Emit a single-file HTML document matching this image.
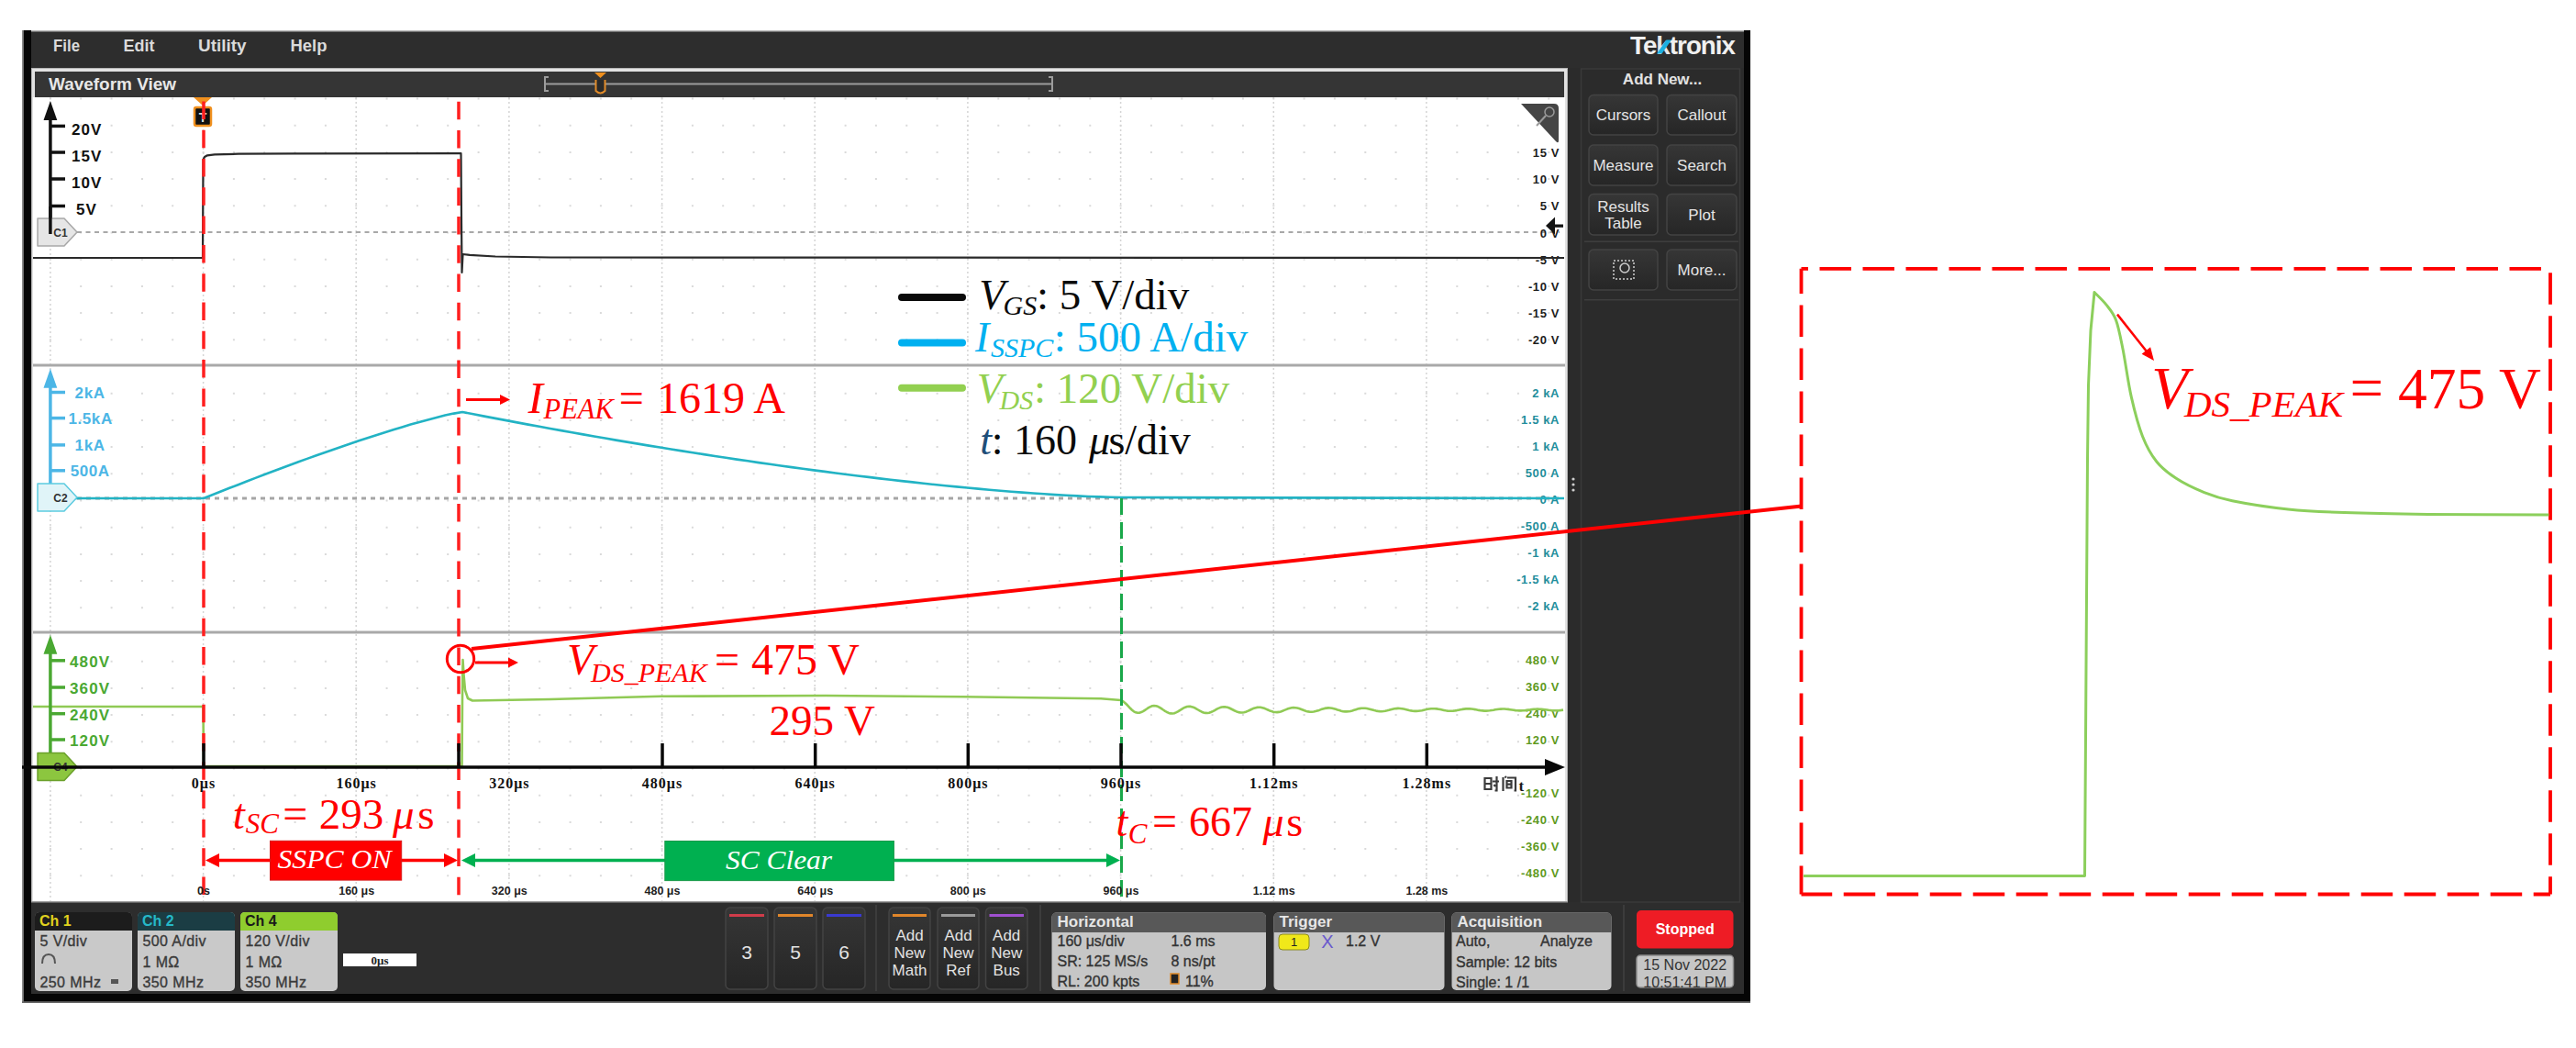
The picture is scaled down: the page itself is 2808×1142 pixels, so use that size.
<!DOCTYPE html>
<html><head><meta charset="utf-8"><style>
html,body{margin:0;padding:0;background:#fff;width:2808px;height:1142px;overflow:hidden}
svg{display:block}
</style></head><body>
<svg width="2808" height="1142" viewBox="0 0 2808 1142">
<defs><linearGradient id="bg1" x1="0" y1="0" x2="0" y2="1"><stop offset="0" stop-color="#363636"/><stop offset="1" stop-color="#262626"/></linearGradient></defs>
<rect x="24.0" y="33.0" width="1884.0" height="1060.0" fill="#2d2d2d" />
<rect x="24.0" y="33.0" width="1884.0" height="1.5" fill="#b8b8b8" />
<rect x="24.0" y="33.0" width="10.0" height="1060.0" fill="#050505" />
<rect x="1901.0" y="33.0" width="7.0" height="1060.0" fill="#050505" />
<rect x="24.0" y="1083.0" width="1884.0" height="10.0" fill="#050505" />
<rect x="24.0" y="33.0" width="1.8" height="1060.0" fill="#8a8a8a" />
<rect x="24.0" y="1091.2" width="1884.0" height="1.8" fill="#6a6a6a" />
<text x="58.0" y="56.0" font-family="Liberation Sans" font-size="19" font-weight="bold" font-style="normal" fill="#dadada" text-anchor="start" textLength="29" lengthAdjust="spacingAndGlyphs">File</text>
<text x="134.5" y="56.0" font-family="Liberation Sans" font-size="19" font-weight="bold" font-style="normal" fill="#dadada" text-anchor="start" textLength="34" lengthAdjust="spacingAndGlyphs">Edit</text>
<text x="216.0" y="56.0" font-family="Liberation Sans" font-size="19" font-weight="bold" font-style="normal" fill="#dadada" text-anchor="start" textLength="52.5" lengthAdjust="spacingAndGlyphs">Utility</text>
<text x="316.5" y="56.0" font-family="Liberation Sans" font-size="19" font-weight="bold" font-style="normal" fill="#dadada" text-anchor="start" textLength="40" lengthAdjust="spacingAndGlyphs">Help</text>
<text x="1777.0" y="58.5" font-family="Liberation Sans" font-size="28" font-weight="bold" font-style="normal" fill="#f0f0f0" text-anchor="start" textLength="114" lengthAdjust="spacingAndGlyphs" letter-spacing="-1">Te<tspan fill='#e8e8e8'>k</tspan>tronix</text>
<polygon points="1806,58.5 1811.5,58.5 1822,43.5 1816.5,43.5" fill="#1ab0e0"/>
<rect x="34.0" y="74.0" width="1675.0" height="909.0" fill="#b4b4b4" />
<rect x="35.0" y="75.0" width="1673.0" height="908.0" fill="#e2e2e2" />
<rect x="38.0" y="78.0" width="1667.0" height="28.0" fill="#353535" />
<rect x="36.0" y="106.0" width="1670.0" height="876.0" fill="#ffffff" />
<rect x="34.0" y="982.0" width="1675.0" height="1.5" fill="#9c9c9c" />
<text x="53.0" y="98.0" font-family="Liberation Sans" font-size="19" font-weight="bold" font-style="normal" fill="#e8e8e8" text-anchor="start" textLength="139" lengthAdjust="spacingAndGlyphs">Waveform View</text>
<line x1="594.0" y1="91.5" x2="1147.0" y2="91.5" stroke="#9c9c9c" stroke-width="2" />
<path d="M598,84 L594,84 L594,99 L598,99" fill="none" stroke="#9c9c9c" stroke-width="2"/>
<path d="M1143,84 L1147,84 L1147,99 L1143,99" fill="none" stroke="#9c9c9c" stroke-width="2"/>
<polygon points="648,79 661,79 654.5,85" fill="#f0901e"/>
<path d="M649.5,87 L649.5,99 Q654.5,104 659.5,99 L659.5,87" fill="#2a2a2a" stroke="#e08a28" stroke-width="2"/>
<path d="M53.9,107.5h2M87.2,107.5h2M120.6,107.5h2M153.9,107.5h2M187.2,107.5h2M220.6,107.5h2M253.9,107.5h2M287.2,107.5h2M320.6,107.5h2M353.9,107.5h2M387.2,107.5h2M420.6,107.5h2M453.9,107.5h2M487.2,107.5h2M520.6,107.5h2M553.9,107.5h2M587.2,107.5h2M620.6,107.5h2M653.9,107.5h2M687.2,107.5h2M720.6,107.5h2M753.9,107.5h2M787.2,107.5h2M820.6,107.5h2M853.9,107.5h2M887.2,107.5h2M920.6,107.5h2M953.9,107.5h2M987.3,107.5h2M1020.6,107.5h2M1053.9,107.5h2M1087.3,107.5h2M1120.6,107.5h2M1153.9,107.5h2M1187.3,107.5h2M1220.6,107.5h2M1253.9,107.5h2M1287.3,107.5h2M1320.6,107.5h2M1353.9,107.5h2M1387.3,107.5h2M1420.6,107.5h2M1453.9,107.5h2M1487.3,107.5h2M1520.6,107.5h2M1553.9,107.5h2M1587.3,107.5h2M1620.6,107.5h2M1653.9,107.5h2M1687.3,107.5h2M53.9,136.7h2M87.2,136.7h2M120.6,136.7h2M153.9,136.7h2M187.2,136.7h2M220.6,136.7h2M253.9,136.7h2M287.2,136.7h2M320.6,136.7h2M353.9,136.7h2M387.2,136.7h2M420.6,136.7h2M453.9,136.7h2M487.2,136.7h2M520.6,136.7h2M553.9,136.7h2M587.2,136.7h2M620.6,136.7h2M653.9,136.7h2M687.2,136.7h2M720.6,136.7h2M753.9,136.7h2M787.2,136.7h2M820.6,136.7h2M853.9,136.7h2M887.2,136.7h2M920.6,136.7h2M953.9,136.7h2M987.3,136.7h2M1020.6,136.7h2M1053.9,136.7h2M1087.3,136.7h2M1120.6,136.7h2M1153.9,136.7h2M1187.3,136.7h2M1220.6,136.7h2M1253.9,136.7h2M1287.3,136.7h2M1320.6,136.7h2M1353.9,136.7h2M1387.3,136.7h2M1420.6,136.7h2M1453.9,136.7h2M1487.3,136.7h2M1520.6,136.7h2M1553.9,136.7h2M1587.3,136.7h2M1620.6,136.7h2M1653.9,136.7h2M1687.3,136.7h2M53.9,165.9h2M87.2,165.9h2M120.6,165.9h2M153.9,165.9h2M187.2,165.9h2M220.6,165.9h2M253.9,165.9h2M287.2,165.9h2M320.6,165.9h2M353.9,165.9h2M387.2,165.9h2M420.6,165.9h2M453.9,165.9h2M487.2,165.9h2M520.6,165.9h2M553.9,165.9h2M587.2,165.9h2M620.6,165.9h2M653.9,165.9h2M687.2,165.9h2M720.6,165.9h2M753.9,165.9h2M787.2,165.9h2M820.6,165.9h2M853.9,165.9h2M887.2,165.9h2M920.6,165.9h2M953.9,165.9h2M987.3,165.9h2M1020.6,165.9h2M1053.9,165.9h2M1087.3,165.9h2M1120.6,165.9h2M1153.9,165.9h2M1187.3,165.9h2M1220.6,165.9h2M1253.9,165.9h2M1287.3,165.9h2M1320.6,165.9h2M1353.9,165.9h2M1387.3,165.9h2M1420.6,165.9h2M1453.9,165.9h2M1487.3,165.9h2M1520.6,165.9h2M1553.9,165.9h2M1587.3,165.9h2M1620.6,165.9h2M1653.9,165.9h2M1687.3,165.9h2M53.9,195.1h2M87.2,195.1h2M120.6,195.1h2M153.9,195.1h2M187.2,195.1h2M220.6,195.1h2M253.9,195.1h2M287.2,195.1h2M320.6,195.1h2M353.9,195.1h2M387.2,195.1h2M420.6,195.1h2M453.9,195.1h2M487.2,195.1h2M520.6,195.1h2M553.9,195.1h2M587.2,195.1h2M620.6,195.1h2M653.9,195.1h2M687.2,195.1h2M720.6,195.1h2M753.9,195.1h2M787.2,195.1h2M820.6,195.1h2M853.9,195.1h2M887.2,195.1h2M920.6,195.1h2M953.9,195.1h2M987.3,195.1h2M1020.6,195.1h2M1053.9,195.1h2M1087.3,195.1h2M1120.6,195.1h2M1153.9,195.1h2M1187.3,195.1h2M1220.6,195.1h2M1253.9,195.1h2M1287.3,195.1h2M1320.6,195.1h2M1353.9,195.1h2M1387.3,195.1h2M1420.6,195.1h2M1453.9,195.1h2M1487.3,195.1h2M1520.6,195.1h2M1553.9,195.1h2M1587.3,195.1h2M1620.6,195.1h2M1653.9,195.1h2M1687.3,195.1h2M53.9,224.3h2M87.2,224.3h2M120.6,224.3h2M153.9,224.3h2M187.2,224.3h2M220.6,224.3h2M253.9,224.3h2M287.2,224.3h2M320.6,224.3h2M353.9,224.3h2M387.2,224.3h2M420.6,224.3h2M453.9,224.3h2M487.2,224.3h2M520.6,224.3h2M553.9,224.3h2M587.2,224.3h2M620.6,224.3h2M653.9,224.3h2M687.2,224.3h2M720.6,224.3h2M753.9,224.3h2M787.2,224.3h2M820.6,224.3h2M853.9,224.3h2M887.2,224.3h2M920.6,224.3h2M953.9,224.3h2M987.3,224.3h2M1020.6,224.3h2M1053.9,224.3h2M1087.3,224.3h2M1120.6,224.3h2M1153.9,224.3h2M1187.3,224.3h2M1220.6,224.3h2M1253.9,224.3h2M1287.3,224.3h2M1320.6,224.3h2M1353.9,224.3h2M1387.3,224.3h2M1420.6,224.3h2M1453.9,224.3h2M1487.3,224.3h2M1520.6,224.3h2M1553.9,224.3h2M1587.3,224.3h2M1620.6,224.3h2M1653.9,224.3h2M1687.3,224.3h2M53.9,253.5h2M87.2,253.5h2M120.6,253.5h2M153.9,253.5h2M187.2,253.5h2M220.6,253.5h2M253.9,253.5h2M287.2,253.5h2M320.6,253.5h2M353.9,253.5h2M387.2,253.5h2M420.6,253.5h2M453.9,253.5h2M487.2,253.5h2M520.6,253.5h2M553.9,253.5h2M587.2,253.5h2M620.6,253.5h2M653.9,253.5h2M687.2,253.5h2M720.6,253.5h2M753.9,253.5h2M787.2,253.5h2M820.6,253.5h2M853.9,253.5h2M887.2,253.5h2M920.6,253.5h2M953.9,253.5h2M987.3,253.5h2M1020.6,253.5h2M1053.9,253.5h2M1087.3,253.5h2M1120.6,253.5h2M1153.9,253.5h2M1187.3,253.5h2M1220.6,253.5h2M1253.9,253.5h2M1287.3,253.5h2M1320.6,253.5h2M1353.9,253.5h2M1387.3,253.5h2M1420.6,253.5h2M1453.9,253.5h2M1487.3,253.5h2M1520.6,253.5h2M1553.9,253.5h2M1587.3,253.5h2M1620.6,253.5h2M1653.9,253.5h2M1687.3,253.5h2M53.9,282.7h2M87.2,282.7h2M120.6,282.7h2M153.9,282.7h2M187.2,282.7h2M220.6,282.7h2M253.9,282.7h2M287.2,282.7h2M320.6,282.7h2M353.9,282.7h2M387.2,282.7h2M420.6,282.7h2M453.9,282.7h2M487.2,282.7h2M520.6,282.7h2M553.9,282.7h2M587.2,282.7h2M620.6,282.7h2M653.9,282.7h2M687.2,282.7h2M720.6,282.7h2M753.9,282.7h2M787.2,282.7h2M820.6,282.7h2M853.9,282.7h2M887.2,282.7h2M920.6,282.7h2M953.9,282.7h2M987.3,282.7h2M1020.6,282.7h2M1053.9,282.7h2M1087.3,282.7h2M1120.6,282.7h2M1153.9,282.7h2M1187.3,282.7h2M1220.6,282.7h2M1253.9,282.7h2M1287.3,282.7h2M1320.6,282.7h2M1353.9,282.7h2M1387.3,282.7h2M1420.6,282.7h2M1453.9,282.7h2M1487.3,282.7h2M1520.6,282.7h2M1553.9,282.7h2M1587.3,282.7h2M1620.6,282.7h2M1653.9,282.7h2M1687.3,282.7h2M53.9,311.9h2M87.2,311.9h2M120.6,311.9h2M153.9,311.9h2M187.2,311.9h2M220.6,311.9h2M253.9,311.9h2M287.2,311.9h2M320.6,311.9h2M353.9,311.9h2M387.2,311.9h2M420.6,311.9h2M453.9,311.9h2M487.2,311.9h2M520.6,311.9h2M553.9,311.9h2M587.2,311.9h2M620.6,311.9h2M653.9,311.9h2M687.2,311.9h2M720.6,311.9h2M753.9,311.9h2M787.2,311.9h2M820.6,311.9h2M853.9,311.9h2M887.2,311.9h2M920.6,311.9h2M953.9,311.9h2M987.3,311.9h2M1020.6,311.9h2M1053.9,311.9h2M1087.3,311.9h2M1120.6,311.9h2M1153.9,311.9h2M1187.3,311.9h2M1220.6,311.9h2M1253.9,311.9h2M1287.3,311.9h2M1320.6,311.9h2M1353.9,311.9h2M1387.3,311.9h2M1420.6,311.9h2M1453.9,311.9h2M1487.3,311.9h2M1520.6,311.9h2M1553.9,311.9h2M1587.3,311.9h2M1620.6,311.9h2M1653.9,311.9h2M1687.3,311.9h2M53.9,341.1h2M87.2,341.1h2M120.6,341.1h2M153.9,341.1h2M187.2,341.1h2M220.6,341.1h2M253.9,341.1h2M287.2,341.1h2M320.6,341.1h2M353.9,341.1h2M387.2,341.1h2M420.6,341.1h2M453.9,341.1h2M487.2,341.1h2M520.6,341.1h2M553.9,341.1h2M587.2,341.1h2M620.6,341.1h2M653.9,341.1h2M687.2,341.1h2M720.6,341.1h2M753.9,341.1h2M787.2,341.1h2M820.6,341.1h2M853.9,341.1h2M887.2,341.1h2M920.6,341.1h2M953.9,341.1h2M987.3,341.1h2M1020.6,341.1h2M1053.9,341.1h2M1087.3,341.1h2M1120.6,341.1h2M1153.9,341.1h2M1187.3,341.1h2M1220.6,341.1h2M1253.9,341.1h2M1287.3,341.1h2M1320.6,341.1h2M1353.9,341.1h2M1387.3,341.1h2M1420.6,341.1h2M1453.9,341.1h2M1487.3,341.1h2M1520.6,341.1h2M1553.9,341.1h2M1587.3,341.1h2M1620.6,341.1h2M1653.9,341.1h2M1687.3,341.1h2M53.9,370.3h2M87.2,370.3h2M120.6,370.3h2M153.9,370.3h2M187.2,370.3h2M220.6,370.3h2M253.9,370.3h2M287.2,370.3h2M320.6,370.3h2M353.9,370.3h2M387.2,370.3h2M420.6,370.3h2M453.9,370.3h2M487.2,370.3h2M520.6,370.3h2M553.9,370.3h2M587.2,370.3h2M620.6,370.3h2M653.9,370.3h2M687.2,370.3h2M720.6,370.3h2M753.9,370.3h2M787.2,370.3h2M820.6,370.3h2M853.9,370.3h2M887.2,370.3h2M920.6,370.3h2M953.9,370.3h2M987.3,370.3h2M1020.6,370.3h2M1053.9,370.3h2M1087.3,370.3h2M1120.6,370.3h2M1153.9,370.3h2M1187.3,370.3h2M1220.6,370.3h2M1253.9,370.3h2M1287.3,370.3h2M1320.6,370.3h2M1353.9,370.3h2M1387.3,370.3h2M1420.6,370.3h2M1453.9,370.3h2M1487.3,370.3h2M1520.6,370.3h2M1553.9,370.3h2M1587.3,370.3h2M1620.6,370.3h2M1653.9,370.3h2M1687.3,370.3h2M53.9,428.7h2M87.2,428.7h2M120.6,428.7h2M153.9,428.7h2M187.2,428.7h2M220.6,428.7h2M253.9,428.7h2M287.2,428.7h2M320.6,428.7h2M353.9,428.7h2M387.2,428.7h2M420.6,428.7h2M453.9,428.7h2M487.2,428.7h2M520.6,428.7h2M553.9,428.7h2M587.2,428.7h2M620.6,428.7h2M653.9,428.7h2M687.2,428.7h2M720.6,428.7h2M753.9,428.7h2M787.2,428.7h2M820.6,428.7h2M853.9,428.7h2M887.2,428.7h2M920.6,428.7h2M953.9,428.7h2M987.3,428.7h2M1020.6,428.7h2M1053.9,428.7h2M1087.3,428.7h2M1120.6,428.7h2M1153.9,428.7h2M1187.3,428.7h2M1220.6,428.7h2M1253.9,428.7h2M1287.3,428.7h2M1320.6,428.7h2M1353.9,428.7h2M1387.3,428.7h2M1420.6,428.7h2M1453.9,428.7h2M1487.3,428.7h2M1520.6,428.7h2M1553.9,428.7h2M1587.3,428.7h2M1620.6,428.7h2M1653.9,428.7h2M1687.3,428.7h2M53.9,457.9h2M87.2,457.9h2M120.6,457.9h2M153.9,457.9h2M187.2,457.9h2M220.6,457.9h2M253.9,457.9h2M287.2,457.9h2M320.6,457.9h2M353.9,457.9h2M387.2,457.9h2M420.6,457.9h2M453.9,457.9h2M487.2,457.9h2M520.6,457.9h2M553.9,457.9h2M587.2,457.9h2M620.6,457.9h2M653.9,457.9h2M687.2,457.9h2M720.6,457.9h2M753.9,457.9h2M787.2,457.9h2M820.6,457.9h2M853.9,457.9h2M887.2,457.9h2M920.6,457.9h2M953.9,457.9h2M987.3,457.9h2M1020.6,457.9h2M1053.9,457.9h2M1087.3,457.9h2M1120.6,457.9h2M1153.9,457.9h2M1187.3,457.9h2M1220.6,457.9h2M1253.9,457.9h2M1287.3,457.9h2M1320.6,457.9h2M1353.9,457.9h2M1387.3,457.9h2M1420.6,457.9h2M1453.9,457.9h2M1487.3,457.9h2M1520.6,457.9h2M1553.9,457.9h2M1587.3,457.9h2M1620.6,457.9h2M1653.9,457.9h2M1687.3,457.9h2M53.9,487.1h2M87.2,487.1h2M120.6,487.1h2M153.9,487.1h2M187.2,487.1h2M220.6,487.1h2M253.9,487.1h2M287.2,487.1h2M320.6,487.1h2M353.9,487.1h2M387.2,487.1h2M420.6,487.1h2M453.9,487.1h2M487.2,487.1h2M520.6,487.1h2M553.9,487.1h2M587.2,487.1h2M620.6,487.1h2M653.9,487.1h2M687.2,487.1h2M720.6,487.1h2M753.9,487.1h2M787.2,487.1h2M820.6,487.1h2M853.9,487.1h2M887.2,487.1h2M920.6,487.1h2M953.9,487.1h2M987.3,487.1h2M1020.6,487.1h2M1053.9,487.1h2M1087.3,487.1h2M1120.6,487.1h2M1153.9,487.1h2M1187.3,487.1h2M1220.6,487.1h2M1253.9,487.1h2M1287.3,487.1h2M1320.6,487.1h2M1353.9,487.1h2M1387.3,487.1h2M1420.6,487.1h2M1453.9,487.1h2M1487.3,487.1h2M1520.6,487.1h2M1553.9,487.1h2M1587.3,487.1h2M1620.6,487.1h2M1653.9,487.1h2M1687.3,487.1h2M53.9,516.3h2M87.2,516.3h2M120.6,516.3h2M153.9,516.3h2M187.2,516.3h2M220.6,516.3h2M253.9,516.3h2M287.2,516.3h2M320.6,516.3h2M353.9,516.3h2M387.2,516.3h2M420.6,516.3h2M453.9,516.3h2M487.2,516.3h2M520.6,516.3h2M553.9,516.3h2M587.2,516.3h2M620.6,516.3h2M653.9,516.3h2M687.2,516.3h2M720.6,516.3h2M753.9,516.3h2M787.2,516.3h2M820.6,516.3h2M853.9,516.3h2M887.2,516.3h2M920.6,516.3h2M953.9,516.3h2M987.3,516.3h2M1020.6,516.3h2M1053.9,516.3h2M1087.3,516.3h2M1120.6,516.3h2M1153.9,516.3h2M1187.3,516.3h2M1220.6,516.3h2M1253.9,516.3h2M1287.3,516.3h2M1320.6,516.3h2M1353.9,516.3h2M1387.3,516.3h2M1420.6,516.3h2M1453.9,516.3h2M1487.3,516.3h2M1520.6,516.3h2M1553.9,516.3h2M1587.3,516.3h2M1620.6,516.3h2M1653.9,516.3h2M1687.3,516.3h2M53.9,545.5h2M87.2,545.5h2M120.6,545.5h2M153.9,545.5h2M187.2,545.5h2M220.6,545.5h2M253.9,545.5h2M287.2,545.5h2M320.6,545.5h2M353.9,545.5h2M387.2,545.5h2M420.6,545.5h2M453.9,545.5h2M487.2,545.5h2M520.6,545.5h2M553.9,545.5h2M587.2,545.5h2M620.6,545.5h2M653.9,545.5h2M687.2,545.5h2M720.6,545.5h2M753.9,545.5h2M787.2,545.5h2M820.6,545.5h2M853.9,545.5h2M887.2,545.5h2M920.6,545.5h2M953.9,545.5h2M987.3,545.5h2M1020.6,545.5h2M1053.9,545.5h2M1087.3,545.5h2M1120.6,545.5h2M1153.9,545.5h2M1187.3,545.5h2M1220.6,545.5h2M1253.9,545.5h2M1287.3,545.5h2M1320.6,545.5h2M1353.9,545.5h2M1387.3,545.5h2M1420.6,545.5h2M1453.9,545.5h2M1487.3,545.5h2M1520.6,545.5h2M1553.9,545.5h2M1587.3,545.5h2M1620.6,545.5h2M1653.9,545.5h2M1687.3,545.5h2M53.9,574.7h2M87.2,574.7h2M120.6,574.7h2M153.9,574.7h2M187.2,574.7h2M220.6,574.7h2M253.9,574.7h2M287.2,574.7h2M320.6,574.7h2M353.9,574.7h2M387.2,574.7h2M420.6,574.7h2M453.9,574.7h2M487.2,574.7h2M520.6,574.7h2M553.9,574.7h2M587.2,574.7h2M620.6,574.7h2M653.9,574.7h2M687.2,574.7h2M720.6,574.7h2M753.9,574.7h2M787.2,574.7h2M820.6,574.7h2M853.9,574.7h2M887.2,574.7h2M920.6,574.7h2M953.9,574.7h2M987.3,574.7h2M1020.6,574.7h2M1053.9,574.7h2M1087.3,574.7h2M1120.6,574.7h2M1153.9,574.7h2M1187.3,574.7h2M1220.6,574.7h2M1253.9,574.7h2M1287.3,574.7h2M1320.6,574.7h2M1353.9,574.7h2M1387.3,574.7h2M1420.6,574.7h2M1453.9,574.7h2M1487.3,574.7h2M1520.6,574.7h2M1553.9,574.7h2M1587.3,574.7h2M1620.6,574.7h2M1653.9,574.7h2M1687.3,574.7h2M53.9,603.9h2M87.2,603.9h2M120.6,603.9h2M153.9,603.9h2M187.2,603.9h2M220.6,603.9h2M253.9,603.9h2M287.2,603.9h2M320.6,603.9h2M353.9,603.9h2M387.2,603.9h2M420.6,603.9h2M453.9,603.9h2M487.2,603.9h2M520.6,603.9h2M553.9,603.9h2M587.2,603.9h2M620.6,603.9h2M653.9,603.9h2M687.2,603.9h2M720.6,603.9h2M753.9,603.9h2M787.2,603.9h2M820.6,603.9h2M853.9,603.9h2M887.2,603.9h2M920.6,603.9h2M953.9,603.9h2M987.3,603.9h2M1020.6,603.9h2M1053.9,603.9h2M1087.3,603.9h2M1120.6,603.9h2M1153.9,603.9h2M1187.3,603.9h2M1220.6,603.9h2M1253.9,603.9h2M1287.3,603.9h2M1320.6,603.9h2M1353.9,603.9h2M1387.3,603.9h2M1420.6,603.9h2M1453.9,603.9h2M1487.3,603.9h2M1520.6,603.9h2M1553.9,603.9h2M1587.3,603.9h2M1620.6,603.9h2M1653.9,603.9h2M1687.3,603.9h2M53.9,633.1h2M87.2,633.1h2M120.6,633.1h2M153.9,633.1h2M187.2,633.1h2M220.6,633.1h2M253.9,633.1h2M287.2,633.1h2M320.6,633.1h2M353.9,633.1h2M387.2,633.1h2M420.6,633.1h2M453.9,633.1h2M487.2,633.1h2M520.6,633.1h2M553.9,633.1h2M587.2,633.1h2M620.6,633.1h2M653.9,633.1h2M687.2,633.1h2M720.6,633.1h2M753.9,633.1h2M787.2,633.1h2M820.6,633.1h2M853.9,633.1h2M887.2,633.1h2M920.6,633.1h2M953.9,633.1h2M987.3,633.1h2M1020.6,633.1h2M1053.9,633.1h2M1087.3,633.1h2M1120.6,633.1h2M1153.9,633.1h2M1187.3,633.1h2M1220.6,633.1h2M1253.9,633.1h2M1287.3,633.1h2M1320.6,633.1h2M1353.9,633.1h2M1387.3,633.1h2M1420.6,633.1h2M1453.9,633.1h2M1487.3,633.1h2M1520.6,633.1h2M1553.9,633.1h2M1587.3,633.1h2M1620.6,633.1h2M1653.9,633.1h2M1687.3,633.1h2M53.9,662.3h2M87.2,662.3h2M120.6,662.3h2M153.9,662.3h2M187.2,662.3h2M220.6,662.3h2M253.9,662.3h2M287.2,662.3h2M320.6,662.3h2M353.9,662.3h2M387.2,662.3h2M420.6,662.3h2M453.9,662.3h2M487.2,662.3h2M520.6,662.3h2M553.9,662.3h2M587.2,662.3h2M620.6,662.3h2M653.9,662.3h2M687.2,662.3h2M720.6,662.3h2M753.9,662.3h2M787.2,662.3h2M820.6,662.3h2M853.9,662.3h2M887.2,662.3h2M920.6,662.3h2M953.9,662.3h2M987.3,662.3h2M1020.6,662.3h2M1053.9,662.3h2M1087.3,662.3h2M1120.6,662.3h2M1153.9,662.3h2M1187.3,662.3h2M1220.6,662.3h2M1253.9,662.3h2M1287.3,662.3h2M1320.6,662.3h2M1353.9,662.3h2M1387.3,662.3h2M1420.6,662.3h2M1453.9,662.3h2M1487.3,662.3h2M1520.6,662.3h2M1553.9,662.3h2M1587.3,662.3h2M1620.6,662.3h2M1653.9,662.3h2M1687.3,662.3h2M53.9,720.7h2M87.2,720.7h2M120.6,720.7h2M153.9,720.7h2M187.2,720.7h2M220.6,720.7h2M253.9,720.7h2M287.2,720.7h2M320.6,720.7h2M353.9,720.7h2M387.2,720.7h2M420.6,720.7h2M453.9,720.7h2M487.2,720.7h2M520.6,720.7h2M553.9,720.7h2M587.2,720.7h2M620.6,720.7h2M653.9,720.7h2M687.2,720.7h2M720.6,720.7h2M753.9,720.7h2M787.2,720.7h2M820.6,720.7h2M853.9,720.7h2M887.2,720.7h2M920.6,720.7h2M953.9,720.7h2M987.3,720.7h2M1020.6,720.7h2M1053.9,720.7h2M1087.3,720.7h2M1120.6,720.7h2M1153.9,720.7h2M1187.3,720.7h2M1220.6,720.7h2M1253.9,720.7h2M1287.3,720.7h2M1320.6,720.7h2M1353.9,720.7h2M1387.3,720.7h2M1420.6,720.7h2M1453.9,720.7h2M1487.3,720.7h2M1520.6,720.7h2M1553.9,720.7h2M1587.3,720.7h2M1620.6,720.7h2M1653.9,720.7h2M1687.3,720.7h2M53.9,749.9h2M87.2,749.9h2M120.6,749.9h2M153.9,749.9h2M187.2,749.9h2M220.6,749.9h2M253.9,749.9h2M287.2,749.9h2M320.6,749.9h2M353.9,749.9h2M387.2,749.9h2M420.6,749.9h2M453.9,749.9h2M487.2,749.9h2M520.6,749.9h2M553.9,749.9h2M587.2,749.9h2M620.6,749.9h2M653.9,749.9h2M687.2,749.9h2M720.6,749.9h2M753.9,749.9h2M787.2,749.9h2M820.6,749.9h2M853.9,749.9h2M887.2,749.9h2M920.6,749.9h2M953.9,749.9h2M987.3,749.9h2M1020.6,749.9h2M1053.9,749.9h2M1087.3,749.9h2M1120.6,749.9h2M1153.9,749.9h2M1187.3,749.9h2M1220.6,749.9h2M1253.9,749.9h2M1287.3,749.9h2M1320.6,749.9h2M1353.9,749.9h2M1387.3,749.9h2M1420.6,749.9h2M1453.9,749.9h2M1487.3,749.9h2M1520.6,749.9h2M1553.9,749.9h2M1587.3,749.9h2M1620.6,749.9h2M1653.9,749.9h2M1687.3,749.9h2M53.9,779.1h2M87.2,779.1h2M120.6,779.1h2M153.9,779.1h2M187.2,779.1h2M220.6,779.1h2M253.9,779.1h2M287.2,779.1h2M320.6,779.1h2M353.9,779.1h2M387.2,779.1h2M420.6,779.1h2M453.9,779.1h2M487.2,779.1h2M520.6,779.1h2M553.9,779.1h2M587.2,779.1h2M620.6,779.1h2M653.9,779.1h2M687.2,779.1h2M720.6,779.1h2M753.9,779.1h2M787.2,779.1h2M820.6,779.1h2M853.9,779.1h2M887.2,779.1h2M920.6,779.1h2M953.9,779.1h2M987.3,779.1h2M1020.6,779.1h2M1053.9,779.1h2M1087.3,779.1h2M1120.6,779.1h2M1153.9,779.1h2M1187.3,779.1h2M1220.6,779.1h2M1253.9,779.1h2M1287.3,779.1h2M1320.6,779.1h2M1353.9,779.1h2M1387.3,779.1h2M1420.6,779.1h2M1453.9,779.1h2M1487.3,779.1h2M1520.6,779.1h2M1553.9,779.1h2M1587.3,779.1h2M1620.6,779.1h2M1653.9,779.1h2M1687.3,779.1h2M53.9,808.3h2M87.2,808.3h2M120.6,808.3h2M153.9,808.3h2M187.2,808.3h2M220.6,808.3h2M253.9,808.3h2M287.2,808.3h2M320.6,808.3h2M353.9,808.3h2M387.2,808.3h2M420.6,808.3h2M453.9,808.3h2M487.2,808.3h2M520.6,808.3h2M553.9,808.3h2M587.2,808.3h2M620.6,808.3h2M653.9,808.3h2M687.2,808.3h2M720.6,808.3h2M753.9,808.3h2M787.2,808.3h2M820.6,808.3h2M853.9,808.3h2M887.2,808.3h2M920.6,808.3h2M953.9,808.3h2M987.3,808.3h2M1020.6,808.3h2M1053.9,808.3h2M1087.3,808.3h2M1120.6,808.3h2M1153.9,808.3h2M1187.3,808.3h2M1220.6,808.3h2M1253.9,808.3h2M1287.3,808.3h2M1320.6,808.3h2M1353.9,808.3h2M1387.3,808.3h2M1420.6,808.3h2M1453.9,808.3h2M1487.3,808.3h2M1520.6,808.3h2M1553.9,808.3h2M1587.3,808.3h2M1620.6,808.3h2M1653.9,808.3h2M1687.3,808.3h2M53.9,837.5h2M87.2,837.5h2M120.6,837.5h2M153.9,837.5h2M187.2,837.5h2M220.6,837.5h2M253.9,837.5h2M287.2,837.5h2M320.6,837.5h2M353.9,837.5h2M387.2,837.5h2M420.6,837.5h2M453.9,837.5h2M487.2,837.5h2M520.6,837.5h2M553.9,837.5h2M587.2,837.5h2M620.6,837.5h2M653.9,837.5h2M687.2,837.5h2M720.6,837.5h2M753.9,837.5h2M787.2,837.5h2M820.6,837.5h2M853.9,837.5h2M887.2,837.5h2M920.6,837.5h2M953.9,837.5h2M987.3,837.5h2M1020.6,837.5h2M1053.9,837.5h2M1087.3,837.5h2M1120.6,837.5h2M1153.9,837.5h2M1187.3,837.5h2M1220.6,837.5h2M1253.9,837.5h2M1287.3,837.5h2M1320.6,837.5h2M1353.9,837.5h2M1387.3,837.5h2M1420.6,837.5h2M1453.9,837.5h2M1487.3,837.5h2M1520.6,837.5h2M1553.9,837.5h2M1587.3,837.5h2M1620.6,837.5h2M1653.9,837.5h2M1687.3,837.5h2M53.9,866.7h2M87.2,866.7h2M120.6,866.7h2M153.9,866.7h2M187.2,866.7h2M220.6,866.7h2M253.9,866.7h2M287.2,866.7h2M320.6,866.7h2M353.9,866.7h2M387.2,866.7h2M420.6,866.7h2M453.9,866.7h2M487.2,866.7h2M520.6,866.7h2M553.9,866.7h2M587.2,866.7h2M620.6,866.7h2M653.9,866.7h2M687.2,866.7h2M720.6,866.7h2M753.9,866.7h2M787.2,866.7h2M820.6,866.7h2M853.9,866.7h2M887.2,866.7h2M920.6,866.7h2M953.9,866.7h2M987.3,866.7h2M1020.6,866.7h2M1053.9,866.7h2M1087.3,866.7h2M1120.6,866.7h2M1153.9,866.7h2M1187.3,866.7h2M1220.6,866.7h2M1253.9,866.7h2M1287.3,866.7h2M1320.6,866.7h2M1353.9,866.7h2M1387.3,866.7h2M1420.6,866.7h2M1453.9,866.7h2M1487.3,866.7h2M1520.6,866.7h2M1553.9,866.7h2M1587.3,866.7h2M1620.6,866.7h2M1653.9,866.7h2M1687.3,866.7h2M53.9,895.9h2M87.2,895.9h2M120.6,895.9h2M153.9,895.9h2M187.2,895.9h2M220.6,895.9h2M253.9,895.9h2M287.2,895.9h2M320.6,895.9h2M353.9,895.9h2M387.2,895.9h2M420.6,895.9h2M453.9,895.9h2M487.2,895.9h2M520.6,895.9h2M553.9,895.9h2M587.2,895.9h2M620.6,895.9h2M653.9,895.9h2M687.2,895.9h2M720.6,895.9h2M753.9,895.9h2M787.2,895.9h2M820.6,895.9h2M853.9,895.9h2M887.2,895.9h2M920.6,895.9h2M953.9,895.9h2M987.3,895.9h2M1020.6,895.9h2M1053.9,895.9h2M1087.3,895.9h2M1120.6,895.9h2M1153.9,895.9h2M1187.3,895.9h2M1220.6,895.9h2M1253.9,895.9h2M1287.3,895.9h2M1320.6,895.9h2M1353.9,895.9h2M1387.3,895.9h2M1420.6,895.9h2M1453.9,895.9h2M1487.3,895.9h2M1520.6,895.9h2M1553.9,895.9h2M1587.3,895.9h2M1620.6,895.9h2M1653.9,895.9h2M1687.3,895.9h2M53.9,925.1h2M87.2,925.1h2M120.6,925.1h2M153.9,925.1h2M187.2,925.1h2M220.6,925.1h2M253.9,925.1h2M287.2,925.1h2M320.6,925.1h2M353.9,925.1h2M387.2,925.1h2M420.6,925.1h2M453.9,925.1h2M487.2,925.1h2M520.6,925.1h2M553.9,925.1h2M587.2,925.1h2M620.6,925.1h2M653.9,925.1h2M687.2,925.1h2M720.6,925.1h2M753.9,925.1h2M787.2,925.1h2M820.6,925.1h2M853.9,925.1h2M887.2,925.1h2M920.6,925.1h2M953.9,925.1h2M987.3,925.1h2M1020.6,925.1h2M1053.9,925.1h2M1087.3,925.1h2M1120.6,925.1h2M1153.9,925.1h2M1187.3,925.1h2M1220.6,925.1h2M1253.9,925.1h2M1287.3,925.1h2M1320.6,925.1h2M1353.9,925.1h2M1387.3,925.1h2M1420.6,925.1h2M1453.9,925.1h2M1487.3,925.1h2M1520.6,925.1h2M1553.9,925.1h2M1587.3,925.1h2M1620.6,925.1h2M1653.9,925.1h2M1687.3,925.1h2M53.9,954.3h2M87.2,954.3h2M120.6,954.3h2M153.9,954.3h2M187.2,954.3h2M220.6,954.3h2M253.9,954.3h2M287.2,954.3h2M320.6,954.3h2M353.9,954.3h2M387.2,954.3h2M420.6,954.3h2M453.9,954.3h2M487.2,954.3h2M520.6,954.3h2M553.9,954.3h2M587.2,954.3h2M620.6,954.3h2M653.9,954.3h2M687.2,954.3h2M720.6,954.3h2M753.9,954.3h2M787.2,954.3h2M820.6,954.3h2M853.9,954.3h2M887.2,954.3h2M920.6,954.3h2M953.9,954.3h2M987.3,954.3h2M1020.6,954.3h2M1053.9,954.3h2M1087.3,954.3h2M1120.6,954.3h2M1153.9,954.3h2M1187.3,954.3h2M1220.6,954.3h2M1253.9,954.3h2M1287.3,954.3h2M1320.6,954.3h2M1353.9,954.3h2M1387.3,954.3h2M1420.6,954.3h2M1453.9,954.3h2M1487.3,954.3h2M1520.6,954.3h2M1553.9,954.3h2M1587.3,954.3h2M1620.6,954.3h2M1653.9,954.3h2M1687.3,954.3h2" stroke="#dadada" stroke-width="2" fill="none"/>
<line x1="54.9" y1="106.0" x2="54.9" y2="982.0" stroke="#d4d4d4" stroke-width="1.5" stroke-dasharray="2 3"/>
<line x1="221.6" y1="106.0" x2="221.6" y2="982.0" stroke="#d4d4d4" stroke-width="1.5" stroke-dasharray="2 3"/>
<line x1="388.2" y1="106.0" x2="388.2" y2="982.0" stroke="#d4d4d4" stroke-width="1.5" stroke-dasharray="2 3"/>
<line x1="554.9" y1="106.0" x2="554.9" y2="982.0" stroke="#d4d4d4" stroke-width="1.5" stroke-dasharray="2 3"/>
<line x1="721.6" y1="106.0" x2="721.6" y2="982.0" stroke="#d4d4d4" stroke-width="1.5" stroke-dasharray="2 3"/>
<line x1="888.2" y1="106.0" x2="888.2" y2="982.0" stroke="#d4d4d4" stroke-width="1.5" stroke-dasharray="2 3"/>
<line x1="1054.9" y1="106.0" x2="1054.9" y2="982.0" stroke="#d4d4d4" stroke-width="1.5" stroke-dasharray="2 3"/>
<line x1="1221.6" y1="106.0" x2="1221.6" y2="982.0" stroke="#d4d4d4" stroke-width="1.5" stroke-dasharray="2 3"/>
<line x1="1388.3" y1="106.0" x2="1388.3" y2="982.0" stroke="#d4d4d4" stroke-width="1.5" stroke-dasharray="2 3"/>
<line x1="1554.9" y1="106.0" x2="1554.9" y2="982.0" stroke="#d4d4d4" stroke-width="1.5" stroke-dasharray="2 3"/>
<rect x="36.0" y="396.5" width="1670.0" height="3.0" fill="#a9a9a9" />
<rect x="36.0" y="687.5" width="1670.0" height="3.0" fill="#a9a9a9" />
<line x1="84.0" y1="253.0" x2="1700.0" y2="253.0" stroke="#a8a8a8" stroke-width="2" stroke-dasharray="5 4.5"/>
<line x1="84.0" y1="543.0" x2="1700.0" y2="543.0" stroke="#a6a6a6" stroke-width="3" stroke-dasharray="5 5"/>
<text x="1700.0" y="171.0" font-family="Liberation Sans" font-size="13" font-weight="bold" font-style="normal" fill="#1e1e1e" text-anchor="end" letter-spacing="0.6">15 V</text>
<text x="1700.0" y="200.2" font-family="Liberation Sans" font-size="13" font-weight="bold" font-style="normal" fill="#1e1e1e" text-anchor="end" letter-spacing="0.6">10 V</text>
<text x="1700.0" y="229.4" font-family="Liberation Sans" font-size="13" font-weight="bold" font-style="normal" fill="#1e1e1e" text-anchor="end" letter-spacing="0.6">5 V</text>
<text x="1700.0" y="258.6" font-family="Liberation Sans" font-size="13" font-weight="bold" font-style="normal" fill="#1e1e1e" text-anchor="end" letter-spacing="0.6">0 V</text>
<text x="1700.0" y="287.8" font-family="Liberation Sans" font-size="13" font-weight="bold" font-style="normal" fill="#1e1e1e" text-anchor="end" letter-spacing="0.6">-5 V</text>
<text x="1700.0" y="317.0" font-family="Liberation Sans" font-size="13" font-weight="bold" font-style="normal" fill="#1e1e1e" text-anchor="end" letter-spacing="0.6">-10 V</text>
<text x="1700.0" y="346.2" font-family="Liberation Sans" font-size="13" font-weight="bold" font-style="normal" fill="#1e1e1e" text-anchor="end" letter-spacing="0.6">-15 V</text>
<text x="1700.0" y="375.4" font-family="Liberation Sans" font-size="13" font-weight="bold" font-style="normal" fill="#1e1e1e" text-anchor="end" letter-spacing="0.6">-20 V</text>
<text x="1700.0" y="433.0" font-family="Liberation Sans" font-size="13" font-weight="bold" font-style="normal" fill="#1f8e9c" text-anchor="end" letter-spacing="0.6">2 kA</text>
<text x="1700.0" y="462.0" font-family="Liberation Sans" font-size="13" font-weight="bold" font-style="normal" fill="#1f8e9c" text-anchor="end" letter-spacing="0.6">1.5 kA</text>
<text x="1700.0" y="491.0" font-family="Liberation Sans" font-size="13" font-weight="bold" font-style="normal" fill="#1f8e9c" text-anchor="end" letter-spacing="0.6">1 kA</text>
<text x="1700.0" y="520.0" font-family="Liberation Sans" font-size="13" font-weight="bold" font-style="normal" fill="#1f8e9c" text-anchor="end" letter-spacing="0.6">500 A</text>
<text x="1700.0" y="549.0" font-family="Liberation Sans" font-size="13" font-weight="bold" font-style="normal" fill="#1f8e9c" text-anchor="end" letter-spacing="0.6">0 A</text>
<text x="1700.0" y="578.0" font-family="Liberation Sans" font-size="13" font-weight="bold" font-style="normal" fill="#1f8e9c" text-anchor="end" letter-spacing="0.6">-500 A</text>
<text x="1700.0" y="607.0" font-family="Liberation Sans" font-size="13" font-weight="bold" font-style="normal" fill="#1f8e9c" text-anchor="end" letter-spacing="0.6">-1 kA</text>
<text x="1700.0" y="636.0" font-family="Liberation Sans" font-size="13" font-weight="bold" font-style="normal" fill="#1f8e9c" text-anchor="end" letter-spacing="0.6">-1.5 kA</text>
<text x="1700.0" y="665.0" font-family="Liberation Sans" font-size="13" font-weight="bold" font-style="normal" fill="#1f8e9c" text-anchor="end" letter-spacing="0.6">-2 kA</text>
<text x="1700.0" y="723.5" font-family="Liberation Sans" font-size="13" font-weight="bold" font-style="normal" fill="#5f9a1e" text-anchor="end" letter-spacing="0.6">480 V</text>
<text x="1700.0" y="752.5" font-family="Liberation Sans" font-size="13" font-weight="bold" font-style="normal" fill="#5f9a1e" text-anchor="end" letter-spacing="0.6">360 V</text>
<text x="1700.0" y="781.5" font-family="Liberation Sans" font-size="13" font-weight="bold" font-style="normal" fill="#5f9a1e" text-anchor="end" letter-spacing="0.6">240 V</text>
<text x="1700.0" y="810.5" font-family="Liberation Sans" font-size="13" font-weight="bold" font-style="normal" fill="#5f9a1e" text-anchor="end" letter-spacing="0.6">120 V</text>
<text x="1700.0" y="868.5" font-family="Liberation Sans" font-size="13" font-weight="bold" font-style="normal" fill="#5f9a1e" text-anchor="end" letter-spacing="0.6">-120 V</text>
<text x="1700.0" y="897.5" font-family="Liberation Sans" font-size="13" font-weight="bold" font-style="normal" fill="#5f9a1e" text-anchor="end" letter-spacing="0.6">-240 V</text>
<text x="1700.0" y="926.5" font-family="Liberation Sans" font-size="13" font-weight="bold" font-style="normal" fill="#5f9a1e" text-anchor="end" letter-spacing="0.6">-360 V</text>
<text x="1700.0" y="955.5" font-family="Liberation Sans" font-size="13" font-weight="bold" font-style="normal" fill="#5f9a1e" text-anchor="end" letter-spacing="0.6">-480 V</text>
<path d="M1658,113 L1694,113 Q1699,113 1699,118 L1699,153 Q1699,157 1696,154 Z" fill="#454545"/>
<circle cx="1689" cy="122" r="5" fill="none" stroke="#9a9a9a" stroke-width="1.5"/>
<line x1="1685.0" y1="126.0" x2="1675.0" y2="137.0" stroke="#9a9a9a" stroke-width="2" />
<polyline points="36.0,281.0 221.0,281.0 221.5,174.0 223.0,171.0 226.0,169.3 234.0,168.3 260.0,167.7 320.0,167.3 500.0,167.2 502.5,167.2 503.0,240.0 503.5,297.0 504.5,277.0 512.0,277.8 540.0,279.5 600.0,280.5 1705.0,281.0" fill="none" stroke="#2a2a2a" stroke-width="2.2" stroke-linejoin="round" />
<polyline points="76.0,543.0 222.0,543.0 231.4,539.3 240.8,535.5 250.2,531.8 259.6,528.2 269.0,524.5 278.4,520.9 287.8,517.3 297.2,513.8 306.6,510.3 316.0,506.8 325.4,503.3 334.8,499.9 344.2,496.5 353.6,493.2 363.0,489.9 372.4,486.7 381.8,483.5 391.2,480.3 400.6,477.2 410.0,474.2 419.4,471.2 428.8,468.2 438.2,465.4 447.6,462.6 457.0,459.9 466.4,457.4 475.8,454.9 485.2,452.6 494.6,450.6 504.0,449.0 516.0,451.3 527.9,453.6 539.9,455.9 551.9,458.1 563.8,460.4 575.8,462.6 587.8,464.8 599.7,467.0 611.7,469.1 623.7,471.3 635.6,473.4 647.6,475.5 659.6,477.5 671.5,479.6 683.5,481.6 695.5,483.6 707.4,485.6 719.4,487.5 731.4,489.5 743.3,491.4 755.3,493.3 767.3,495.1 779.2,497.0 791.2,498.8 803.2,500.6 815.1,502.3 827.1,504.1 839.1,505.8 851.0,507.5 863.0,509.1 875.0,510.7 886.9,512.4 898.9,513.9 910.9,515.5 922.8,517.0 934.8,518.5 946.8,519.9 958.7,521.4 970.7,522.7 982.7,524.1 994.6,525.4 1006.6,526.7 1018.6,528.0 1030.5,529.2 1042.5,530.4 1054.5,531.5 1066.4,532.6 1078.4,533.7 1090.4,534.7 1102.3,535.7 1114.3,536.6 1126.3,537.5 1138.2,538.3 1150.2,539.1 1162.2,539.8 1174.1,540.4 1186.1,541.0 1198.1,541.4 1210.0,541.8 1222.0,542.0 1705.0,543.0" fill="none" stroke="#22b3c4" stroke-width="2.6" stroke-linejoin="round" />
<polyline points="36.0,770.0 221.5,770.0 222.0,835.0 503.5,835.0 504.0,760.0 504.5,719.0 505.5,735.0 507.0,752.0 510.0,761.0 515.0,763.5 600.0,762.0 720.0,758.8 900.0,758.0 1050.0,759.3 1200.0,761.3 1222.0,763.0 1222.0,763.0 1224.0,764.1 1226.0,765.7 1228.0,767.5 1230.0,769.6 1232.0,771.8 1234.0,773.7 1236.0,775.3 1238.0,776.3 1240.0,776.8 1242.0,776.7 1244.0,776.1 1246.0,775.1 1248.0,773.8 1250.0,772.5 1252.0,771.1 1254.0,770.1 1256.0,769.3 1258.0,769.1 1260.0,769.2 1262.0,769.8 1264.0,770.8 1266.0,772.1 1268.0,773.5 1270.0,774.8 1272.0,776.0 1274.0,776.9 1276.0,777.4 1278.0,777.5 1280.0,777.2 1282.0,776.4 1284.0,775.4 1286.0,774.1 1288.0,772.9 1290.0,771.7 1292.0,770.7 1294.0,770.0 1296.0,769.8 1298.0,769.9 1300.0,770.4 1302.0,771.2 1304.0,772.3 1306.0,773.5 1308.0,774.7 1310.0,775.7 1312.0,776.5 1314.0,776.9 1316.0,777.0 1318.0,776.7 1320.0,776.0 1322.0,775.1 1324.0,774.1 1326.0,772.9 1328.0,771.9 1330.0,771.1 1332.0,770.5 1334.0,770.3 1336.0,770.4 1338.0,770.8 1340.0,771.5 1342.0,772.5 1344.0,773.5 1346.0,774.5 1348.0,775.4 1350.0,776.1 1352.0,776.4 1354.0,776.5 1356.0,776.2 1358.0,775.7 1360.0,774.9 1362.0,774.0 1364.0,773.0 1366.0,772.1 1368.0,771.4 1370.0,770.9 1372.0,770.7 1374.0,770.8 1376.0,771.2 1378.0,771.8 1380.0,772.6 1382.0,773.5 1384.0,774.4 1386.0,775.1 1388.0,775.7 1390.0,776.0 1392.0,776.1 1394.0,775.9 1396.0,775.4 1398.0,774.7 1400.0,773.9 1402.0,773.1 1404.0,772.3 1406.0,771.7 1408.0,771.3 1410.0,771.1 1412.0,771.2 1414.0,771.5 1416.0,772.0 1418.0,772.7 1420.0,773.5 1422.0,774.3 1424.0,774.9 1426.0,775.4 1428.0,775.7 1430.0,775.7 1432.0,775.5 1434.0,775.1 1436.0,774.5 1438.0,773.9 1440.0,773.1 1442.0,772.5 1444.0,771.9 1446.0,771.6 1448.0,771.4 1450.0,771.5 1452.0,771.8 1454.0,772.2 1456.0,772.8 1458.0,773.5 1460.0,774.1 1462.0,774.7 1464.0,775.2 1466.0,775.4 1468.0,775.4 1470.0,775.3 1472.0,774.9 1474.0,774.4 1476.0,773.8 1478.0,773.2 1480.0,772.6 1482.0,772.1 1484.0,771.8 1486.0,771.7 1488.0,771.8 1490.0,772.0 1492.0,772.4 1494.0,772.9 1496.0,773.5 1498.0,774.1 1500.0,774.6 1502.0,774.9 1504.0,775.1 1506.0,775.2 1508.0,775.0 1510.0,774.7 1512.0,774.3 1514.0,773.8 1516.0,773.2 1518.0,772.7 1520.0,772.3 1522.0,772.1 1524.0,771.9 1526.0,772.0 1528.0,772.2 1530.0,772.6 1532.0,773.0 1534.0,773.5 1536.0,774.0 1538.0,774.4 1540.0,774.7 1542.0,774.9 1544.0,774.9 1546.0,774.8 1548.0,774.5 1550.0,774.2 1552.0,773.7 1554.0,773.3 1556.0,772.8 1558.0,772.5 1560.0,772.3 1562.0,772.2 1564.0,772.2 1566.0,772.4 1568.0,772.7 1570.0,773.1 1572.0,773.5 1574.0,773.9 1576.0,774.3 1578.0,774.6 1580.0,774.7 1582.0,774.7 1584.0,774.6 1586.0,774.4 1588.0,774.1 1590.0,773.7 1592.0,773.3 1594.0,772.9 1596.0,772.6 1598.0,772.4 1600.0,772.3 1602.0,772.4 1604.0,772.5 1606.0,772.8 1608.0,773.1 1610.0,773.5 1612.0,773.9 1614.0,774.2 1616.0,774.4 1618.0,774.6 1620.0,774.6 1622.0,774.5 1624.0,774.3 1626.0,774.0 1628.0,773.7 1630.0,773.3 1632.0,773.0 1634.0,772.7 1636.0,772.6 1638.0,772.5 1640.0,772.5 1642.0,772.7 1644.0,772.9 1646.0,773.2 1648.0,773.5 1650.0,773.8 1652.0,774.1 1654.0,774.3 1656.0,774.4 1658.0,774.4 1660.0,774.3 1662.0,774.2 1664.0,773.9 1666.0,773.6 1668.0,773.4 1670.0,773.1 1672.0,772.8 1674.0,772.7 1676.0,772.6 1678.0,772.7 1680.0,772.8 1682.0,773.0 1684.0,773.2 1686.0,773.5 1688.0,773.8 1690.0,774.0 1692.0,774.2 1694.0,774.3 1696.0,774.3 1698.0,774.2 1700.0,774.1 1702.0,773.9 1704.0,773.6" fill="none" stroke="#90ca55" stroke-width="2.6" stroke-linejoin="round" />
<polygon points="211,106 231,106 221,115" fill="#f0901e"/>
<rect x="212.0" y="117.0" width="18.0" height="20.0" fill="#111111" stroke="#f0901e" stroke-width="2.5" rx="2"/>
<text x="221.0" y="133.0" font-family="Liberation Sans" font-size="14" font-weight="bold" font-style="normal" fill="#dddddd" text-anchor="middle" >T</text>
<polygon points="1685,246 1695,236.5 1695,255.5" fill="#141414"/>
<rect x="1693.0" y="244.5" width="11.0" height="3.3" fill="#141414" />
<line x1="54.9" y1="128.0" x2="54.9" y2="255.0" stroke="#111111" stroke-width="3.5" />
<polygon points="54.9,110 47.5,131 62.3,131" fill="#111111"/>
<line x1="54.9" y1="137.4" x2="71.0" y2="137.4" stroke="#111111" stroke-width="3.5" />
<text x="78.0" y="146.9" font-family="Liberation Sans" font-size="17" font-weight="bold" font-style="normal" fill="#111111" text-anchor="start" letter-spacing="1">20V</text>
<line x1="54.9" y1="166.0" x2="71.0" y2="166.0" stroke="#111111" stroke-width="3.5" />
<text x="78.0" y="175.5" font-family="Liberation Sans" font-size="17" font-weight="bold" font-style="normal" fill="#111111" text-anchor="start" letter-spacing="1">15V</text>
<line x1="54.9" y1="195.0" x2="71.0" y2="195.0" stroke="#111111" stroke-width="3.5" />
<text x="78.0" y="204.5" font-family="Liberation Sans" font-size="17" font-weight="bold" font-style="normal" fill="#111111" text-anchor="start" letter-spacing="1">10V</text>
<line x1="54.9" y1="224.5" x2="71.0" y2="224.5" stroke="#111111" stroke-width="3.5" />
<text x="83.0" y="234.0" font-family="Liberation Sans" font-size="17" font-weight="bold" font-style="normal" fill="#111111" text-anchor="start" letter-spacing="1">5V</text>
<line x1="54.9" y1="419.7" x2="54.9" y2="543.0" stroke="#4cb6e6" stroke-width="3.5" />
<polygon points="54.9,401.7 47.5,422.7 62.3,422.7" fill="#4cb6e6"/>
<line x1="54.9" y1="427.5" x2="71.0" y2="427.5" stroke="#4cb6e6" stroke-width="3.5" />
<text x="81.6" y="433.5" font-family="Liberation Sans" font-size="17" font-weight="bold" font-style="normal" fill="#4cb6e6" text-anchor="start" letter-spacing="0.6">2kA</text>
<line x1="54.9" y1="455.6" x2="71.0" y2="455.6" stroke="#4cb6e6" stroke-width="3.5" />
<text x="74.4" y="461.6" font-family="Liberation Sans" font-size="17" font-weight="bold" font-style="normal" fill="#4cb6e6" text-anchor="start" letter-spacing="0.6">1.5kA</text>
<line x1="54.9" y1="484.9" x2="71.0" y2="484.9" stroke="#4cb6e6" stroke-width="3.5" />
<text x="81.6" y="490.9" font-family="Liberation Sans" font-size="17" font-weight="bold" font-style="normal" fill="#4cb6e6" text-anchor="start" letter-spacing="0.6">1kA</text>
<line x1="54.9" y1="512.8" x2="71.0" y2="512.8" stroke="#4cb6e6" stroke-width="3.5" />
<text x="76.7" y="518.8" font-family="Liberation Sans" font-size="17" font-weight="bold" font-style="normal" fill="#4cb6e6" text-anchor="start" letter-spacing="0.6">500A</text>
<line x1="54.9" y1="709.8" x2="54.9" y2="836.0" stroke="#4aa832" stroke-width="3.5" />
<polygon points="54.9,691.8 47.5,712.8 62.3,712.8" fill="#4aa832"/>
<line x1="54.9" y1="719.8" x2="71.0" y2="719.8" stroke="#4aa832" stroke-width="3.5" />
<text x="75.9" y="726.8" font-family="Liberation Sans" font-size="17" font-weight="bold" font-style="normal" fill="#4aa832" text-anchor="start" letter-spacing="1.2">480V</text>
<line x1="54.9" y1="749.0" x2="71.0" y2="749.0" stroke="#4aa832" stroke-width="3.5" />
<text x="75.9" y="756.0" font-family="Liberation Sans" font-size="17" font-weight="bold" font-style="normal" fill="#4aa832" text-anchor="start" letter-spacing="1.2">360V</text>
<line x1="54.9" y1="777.7" x2="71.0" y2="777.7" stroke="#4aa832" stroke-width="3.5" />
<text x="75.9" y="784.7" font-family="Liberation Sans" font-size="17" font-weight="bold" font-style="normal" fill="#4aa832" text-anchor="start" letter-spacing="1.2">240V</text>
<line x1="54.9" y1="806.0" x2="71.0" y2="806.0" stroke="#4aa832" stroke-width="3.5" />
<text x="75.9" y="813.0" font-family="Liberation Sans" font-size="17" font-weight="bold" font-style="normal" fill="#4aa832" text-anchor="start" letter-spacing="1.2">120V</text>
<path d="M41,238 L70,238 L84,253 L70,268 L41,268 Z" fill="#e6e6e6" stroke="#a8a8a8" stroke-width="1.5" stroke-linejoin="round"/>
<text x="66.0" y="257.5" font-family="Liberation Sans" font-size="12" font-weight="bold" font-style="normal" fill="#333" text-anchor="middle" >C1</text>
<path d="M41,527 L70,527 L84,542 L70,557 L41,557 Z" fill="#e0f4f8" stroke="#5ccbe0" stroke-width="1.5" stroke-linejoin="round"/>
<text x="66.0" y="546.5" font-family="Liberation Sans" font-size="12" font-weight="bold" font-style="normal" fill="#333" text-anchor="middle" >C2</text>
<path d="M41,820.5 L70,820.5 L84,835.5 L70,850.5 L41,850.5 Z" fill="#8cc63f" stroke="#6aa02a" stroke-width="1.5" stroke-linejoin="round"/>
<text x="66.0" y="840.0" font-family="Liberation Sans" font-size="12" font-weight="bold" font-style="normal" fill="#333" text-anchor="middle" >C4</text>
<line x1="54.9" y1="225.0" x2="54.9" y2="255.0" stroke="#111111" stroke-width="3.5" />
<line x1="222.0" y1="106.0" x2="222.0" y2="982.0" stroke="#ff1f1f" stroke-width="3.5" stroke-dasharray="19.5 11.8" stroke-dashoffset="26.9"/>
<line x1="500.0" y1="106.0" x2="500.0" y2="982.0" stroke="#ff1f1f" stroke-width="3.5" stroke-dasharray="19.5 11.8" stroke-dashoffset="26.6"/>
<line x1="1222.5" y1="543.0" x2="1222.5" y2="982.0" stroke="#1aa84a" stroke-width="3" stroke-dasharray="18 8"/>
<line x1="24.0" y1="836.0" x2="1692.0" y2="836.0" stroke="#080808" stroke-width="3.6" />
<polygon points="1706.0,836.0 1684.0,845.0 1684.0,827.0" fill="#080808"/>
<line x1="222.0" y1="810.0" x2="222.0" y2="836.0" stroke="#080808" stroke-width="3.5" />
<line x1="500.0" y1="810.0" x2="500.0" y2="836.0" stroke="#080808" stroke-width="3.5" />
<line x1="722.0" y1="810.0" x2="722.0" y2="836.0" stroke="#080808" stroke-width="3.5" />
<line x1="888.7" y1="810.0" x2="888.7" y2="836.0" stroke="#080808" stroke-width="3.5" />
<line x1="1055.3" y1="810.0" x2="1055.3" y2="836.0" stroke="#080808" stroke-width="3.5" />
<line x1="1222.0" y1="810.0" x2="1222.0" y2="836.0" stroke="#080808" stroke-width="3.5" />
<line x1="1388.7" y1="810.0" x2="1388.7" y2="836.0" stroke="#080808" stroke-width="3.5" />
<line x1="1555.3" y1="810.0" x2="1555.3" y2="836.0" stroke="#080808" stroke-width="3.5" />
<text x="222.0" y="859.0" font-family="Liberation Serif" font-size="16" font-weight="bold" font-style="normal" fill="#111111" text-anchor="middle" letter-spacing="1">0μs</text>
<text x="388.7" y="859.0" font-family="Liberation Serif" font-size="16" font-weight="bold" font-style="normal" fill="#111111" text-anchor="middle" letter-spacing="1">160μs</text>
<text x="555.3" y="859.0" font-family="Liberation Serif" font-size="16" font-weight="bold" font-style="normal" fill="#111111" text-anchor="middle" letter-spacing="1">320μs</text>
<text x="722.0" y="859.0" font-family="Liberation Serif" font-size="16" font-weight="bold" font-style="normal" fill="#111111" text-anchor="middle" letter-spacing="1">480μs</text>
<text x="888.7" y="859.0" font-family="Liberation Serif" font-size="16" font-weight="bold" font-style="normal" fill="#111111" text-anchor="middle" letter-spacing="1">640μs</text>
<text x="1055.3" y="859.0" font-family="Liberation Serif" font-size="16" font-weight="bold" font-style="normal" fill="#111111" text-anchor="middle" letter-spacing="1">800μs</text>
<text x="1222.0" y="859.0" font-family="Liberation Serif" font-size="16" font-weight="bold" font-style="normal" fill="#111111" text-anchor="middle" letter-spacing="1">960μs</text>
<text x="1388.7" y="859.0" font-family="Liberation Serif" font-size="16" font-weight="bold" font-style="normal" fill="#111111" text-anchor="middle" letter-spacing="1">1.12ms</text>
<text x="1555.4" y="859.0" font-family="Liberation Serif" font-size="16" font-weight="bold" font-style="normal" fill="#111111" text-anchor="middle" letter-spacing="1">1.28ms</text>
<path d="M1618.5,848 h7 v12 h-7 z M1618.5,854 h7 M1627,851.5 h7 M1631.5,846 v15.5 h-2 M1628.5,855 l1.5,2 M1638.5,847 v15 M1640.5,846 l1.5,1.5 M1643,847.5 h9 v14 h-1.5 M1642.5,851 h5 v7.5 h-5 z M1642.5,854.7 h5" fill="none" stroke="#3a3a3a" stroke-width="2.2"/>
<text x="1655.5" y="861.5" font-family="Liberation Serif" font-size="17" font-weight="bold" font-style="normal" fill="#1a1a1a" text-anchor="start" >t</text>
<text x="222.0" y="974.5" font-family="Liberation Sans" font-size="12.5" font-weight="bold" font-style="normal" fill="#1e1e1e" text-anchor="middle" >0s</text>
<text x="388.7" y="974.5" font-family="Liberation Sans" font-size="12.5" font-weight="bold" font-style="normal" fill="#1e1e1e" text-anchor="middle" >160 μs</text>
<text x="555.3" y="974.5" font-family="Liberation Sans" font-size="12.5" font-weight="bold" font-style="normal" fill="#1e1e1e" text-anchor="middle" >320 μs</text>
<text x="722.0" y="974.5" font-family="Liberation Sans" font-size="12.5" font-weight="bold" font-style="normal" fill="#1e1e1e" text-anchor="middle" >480 μs</text>
<text x="888.7" y="974.5" font-family="Liberation Sans" font-size="12.5" font-weight="bold" font-style="normal" fill="#1e1e1e" text-anchor="middle" >640 μs</text>
<text x="1055.3" y="974.5" font-family="Liberation Sans" font-size="12.5" font-weight="bold" font-style="normal" fill="#1e1e1e" text-anchor="middle" >800 μs</text>
<text x="1222.0" y="974.5" font-family="Liberation Sans" font-size="12.5" font-weight="bold" font-style="normal" fill="#1e1e1e" text-anchor="middle" >960 μs</text>
<text x="1388.7" y="974.5" font-family="Liberation Sans" font-size="12.5" font-weight="bold" font-style="normal" fill="#1e1e1e" text-anchor="middle" >1.12 ms</text>
<text x="1555.4" y="974.5" font-family="Liberation Sans" font-size="12.5" font-weight="bold" font-style="normal" fill="#1e1e1e" text-anchor="middle" >1.28 ms</text>
<line x1="983.0" y1="324.0" x2="1049.0" y2="324.0" stroke="#0a0a0a" stroke-width="8" stroke-linecap="round"/>
<line x1="983.0" y1="373.4" x2="1049.0" y2="373.4" stroke="#00b0f0" stroke-width="8" stroke-linecap="round"/>
<line x1="983.0" y1="422.8" x2="1049.0" y2="422.8" stroke="#92d050" stroke-width="8" stroke-linecap="round"/>
<text x="1067.2" y="337.3" font-family="Liberation Serif" font-size="46" font-weight="normal" font-style="italic" fill="#0a0a0a" text-anchor="start" >V</text>
<text x="1093.5" y="342.7" font-family="Liberation Serif" font-size="30" font-weight="normal" font-style="italic" fill="#0a0a0a" text-anchor="start" >GS</text>
<text x="1130.0" y="337.3" font-family="Liberation Serif" font-size="47" font-weight="normal" font-style="normal" fill="#0a0a0a" text-anchor="start" >: 5 V/div</text>
<text x="1063.0" y="383.0" font-family="Liberation Serif" font-size="46" font-weight="normal" font-style="italic" fill="#00b0f0" text-anchor="start" >I</text>
<text x="1079.9" y="389.0" font-family="Liberation Serif" font-size="30" font-weight="normal" font-style="italic" fill="#00b0f0" text-anchor="start" >SSPC</text>
<text x="1148.7" y="383.0" font-family="Liberation Serif" font-size="47" font-weight="normal" font-style="normal" fill="#00b0f0" text-anchor="start" >: 500 A/div</text>
<text x="1064.8" y="439.1" font-family="Liberation Serif" font-size="46" font-weight="normal" font-style="italic" fill="#92d050" text-anchor="start" >V</text>
<text x="1089.5" y="446.3" font-family="Liberation Serif" font-size="30" font-weight="normal" font-style="italic" fill="#92d050" text-anchor="start" >DS</text>
<text x="1127.0" y="439.1" font-family="Liberation Serif" font-size="47" font-weight="normal" font-style="normal" fill="#92d050" text-anchor="start" >: 120 V/div</text>
<text x="1068.2" y="495.0" font-family="Liberation Serif" font-size="46" font-weight="normal" font-style="italic" fill="#1f4e79" text-anchor="start" >t</text>
<text x="1080.7" y="495.0" font-family="Liberation Serif" font-size="46" font-weight="normal" font-style="normal" fill="#0a0a0a" text-anchor="start" >: 160 </text>
<text x="1187.0" y="495.0" font-family="Liberation Serif" font-size="46" font-weight="normal" font-style="italic" fill="#0a0a0a" text-anchor="start" >μ</text>
<text x="1208.4" y="495.0" font-family="Liberation Serif" font-size="46" font-weight="normal" font-style="normal" fill="#0a0a0a" text-anchor="start" >s/div</text>
<line x1="508.0" y1="435.5" x2="546.0" y2="435.5" stroke="#ff0000" stroke-width="3" />
<polygon points="556.0,435.5 545.0,441.0 545.0,430.0" fill="#ff0000"/>
<text x="575.6" y="449.5" font-family="Liberation Serif" font-size="49" font-weight="normal" font-style="italic" fill="#ff0000" text-anchor="start" >I</text>
<text x="592.5" y="455.5" font-family="Liberation Serif" font-size="30.5" font-weight="normal" font-style="italic" fill="#ff0000" text-anchor="start" >PEAK</text>
<text x="674.7" y="449.5" font-family="Liberation Serif" font-size="48" font-weight="normal" font-style="normal" fill="#ff0000" text-anchor="start" >=</text>
<text x="716.0" y="449.5" font-family="Liberation Serif" font-size="48" font-weight="normal" font-style="normal" fill="#ff0000" text-anchor="start" >1619 A</text>
<circle cx="502" cy="718" r="14.7" fill="none" stroke="#ff0000" stroke-width="3"/>
<line x1="518.0" y1="722.0" x2="555.0" y2="722.0" stroke="#ff0000" stroke-width="3" />
<polygon points="565.0,722.0 554.0,727.5 554.0,716.5" fill="#ff0000"/>
<text x="618.0" y="734.7" font-family="Liberation Serif" font-size="48" font-weight="normal" font-style="italic" fill="#ff0000" text-anchor="start" >V</text>
<text x="644.0" y="743.1" font-family="Liberation Serif" font-size="30" font-weight="normal" font-style="italic" fill="#ff0000" text-anchor="start" >DS_PEAK</text>
<text x="779.0" y="734.7" font-family="Liberation Serif" font-size="48" font-weight="normal" font-style="normal" fill="#ff0000" text-anchor="start" >=</text>
<text x="819.0" y="734.7" font-family="Liberation Serif" font-size="48" font-weight="normal" font-style="normal" fill="#ff0000" text-anchor="start" >475 V</text>
<text x="838.5" y="800.5" font-family="Liberation Serif" font-size="47" font-weight="normal" font-style="normal" fill="#ff0000" text-anchor="start" >295 V</text>
<text x="253.7" y="903.3" font-family="Liberation Serif" font-size="47" font-weight="normal" font-style="italic" fill="#ff0000" text-anchor="start" >t</text>
<text x="267.8" y="908.0" font-family="Liberation Serif" font-size="31" font-weight="normal" font-style="italic" fill="#ff0000" text-anchor="start" >SC</text>
<text x="308.2" y="903.3" font-family="Liberation Serif" font-size="48" font-weight="normal" font-style="normal" fill="#ff0000" text-anchor="start" >=</text>
<text x="347.8" y="903.3" font-family="Liberation Serif" font-size="47" font-weight="normal" font-style="normal" fill="#ff0000" text-anchor="start" >293</text>
<text x="428.0" y="903.3" font-family="Liberation Serif" font-size="47" font-weight="normal" font-style="italic" fill="#ff0000" text-anchor="start" >μ</text>
<text x="455.3" y="903.3" font-family="Liberation Serif" font-size="47" font-weight="normal" font-style="normal" fill="#ff0000" text-anchor="start" >s</text>
<text x="1216.4" y="911.4" font-family="Liberation Serif" font-size="46" font-weight="normal" font-style="italic" fill="#ff0000" text-anchor="start" >t</text>
<text x="1229.8" y="918.6" font-family="Liberation Serif" font-size="31" font-weight="normal" font-style="italic" fill="#ff0000" text-anchor="start" >C</text>
<text x="1256.0" y="911.4" font-family="Liberation Serif" font-size="48" font-weight="normal" font-style="normal" fill="#ff0000" text-anchor="start" >=</text>
<text x="1295.9" y="911.4" font-family="Liberation Serif" font-size="46" font-weight="normal" font-style="normal" fill="#ff0000" text-anchor="start" >667</text>
<text x="1376.4" y="911.4" font-family="Liberation Serif" font-size="46" font-weight="normal" font-style="italic" fill="#ff0000" text-anchor="start" >μ</text>
<text x="1402.3" y="911.4" font-family="Liberation Serif" font-size="46" font-weight="normal" font-style="normal" fill="#ff0000" text-anchor="start" >s</text>
<line x1="236.0" y1="937.6" x2="486.0" y2="937.6" stroke="#ff0000" stroke-width="3.5" />
<polygon points="224.0,937.6 239.0,930.1 239.0,945.1" fill="#ff0000"/>
<polygon points="499.0,937.6 484.0,945.1 484.0,930.1" fill="#ff0000"/>
<rect x="294.5" y="916.3" width="143.2" height="42.8" fill="#ff0000" stroke="#d81a1a" stroke-width="1"/>
<text x="302.5" y="946.0" font-family="Liberation Serif" font-size="30" font-weight="normal" font-style="italic" fill="#ffffff" text-anchor="start" textLength="124" lengthAdjust="spacingAndGlyphs">SSPC ON</text>
<line x1="515.0" y1="937.6" x2="1208.0" y2="937.6" stroke="#00b050" stroke-width="3.5" />
<polygon points="503.0,937.6 518.0,930.1 518.0,945.1" fill="#00b050"/>
<polygon points="1221.0,937.6 1206.0,945.1 1206.0,930.1" fill="#00b050"/>
<rect x="724.8" y="916.5" width="249.6" height="43.1" fill="#00b050" stroke="#1a9a4a" stroke-width="1"/>
<text x="791.0" y="946.5" font-family="Liberation Serif" font-size="30" font-weight="normal" font-style="italic" fill="#ffffff" text-anchor="start" textLength="116" lengthAdjust="spacingAndGlyphs">SC Clear</text>
<rect x="1709.0" y="74.0" width="192.0" height="909.0" fill="#2b2b2b" />
<rect x="1723.5" y="75" width="173" height="908" fill="none" stroke="#3a3a3a" stroke-width="1.5"/>
<text x="1812.0" y="92.4" font-family="Liberation Sans" font-size="17" font-weight="bold" font-style="normal" fill="#e2e2e2" text-anchor="middle" >Add New...</text>
<rect x="1732" y="103.5" width="75" height="43.5" rx="5" fill="url(#bg1)" stroke="#434343" stroke-width="1.5"/>
<text x="1769.5" y="131.2" font-family="Liberation Sans" font-size="17" font-weight="normal" font-style="normal" fill="#e4e4e4" text-anchor="middle" >Cursors</text>
<rect x="1817" y="103.5" width="76" height="43.5" rx="5" fill="url(#bg1)" stroke="#434343" stroke-width="1.5"/>
<text x="1855.0" y="131.2" font-family="Liberation Sans" font-size="17" font-weight="normal" font-style="normal" fill="#e4e4e4" text-anchor="middle" >Callout</text>
<rect x="1732" y="158" width="75" height="44" rx="5" fill="url(#bg1)" stroke="#434343" stroke-width="1.5"/>
<text x="1769.5" y="186.0" font-family="Liberation Sans" font-size="17" font-weight="normal" font-style="normal" fill="#e4e4e4" text-anchor="middle" >Measure</text>
<rect x="1817" y="158" width="76" height="44" rx="5" fill="url(#bg1)" stroke="#434343" stroke-width="1.5"/>
<text x="1855.0" y="186.0" font-family="Liberation Sans" font-size="17" font-weight="normal" font-style="normal" fill="#e4e4e4" text-anchor="middle" >Search</text>
<rect x="1732" y="211.5" width="75" height="44.5" rx="5" fill="url(#bg1)" stroke="#434343" stroke-width="1.5"/>
<text x="1769.5" y="230.8" font-family="Liberation Sans" font-size="17" font-weight="normal" font-style="normal" fill="#e4e4e4" text-anchor="middle" >Results</text>
<text x="1769.5" y="248.8" font-family="Liberation Sans" font-size="17" font-weight="normal" font-style="normal" fill="#e4e4e4" text-anchor="middle" >Table</text>
<rect x="1817" y="211.5" width="76" height="44.5" rx="5" fill="url(#bg1)" stroke="#434343" stroke-width="1.5"/>
<text x="1855.0" y="239.8" font-family="Liberation Sans" font-size="17" font-weight="normal" font-style="normal" fill="#e4e4e4" text-anchor="middle" >Plot</text>
<rect x="1727.0" y="262.5" width="168.0" height="1.5" fill="#3e3e3e" />
<rect x="1732" y="272" width="75" height="44" rx="5" fill="url(#bg1)" stroke="#434343" stroke-width="1.5"/>
<text x="1769.5" y="300.0" font-family="Liberation Sans" font-size="17" font-weight="normal" font-style="normal" fill="#e4e4e4" text-anchor="middle" ></text>
<rect x="1817" y="272" width="76" height="44" rx="5" fill="url(#bg1)" stroke="#434343" stroke-width="1.5"/>
<text x="1855.0" y="300.0" font-family="Liberation Sans" font-size="17" font-weight="normal" font-style="normal" fill="#e4e4e4" text-anchor="middle" >More...</text>
<rect x="1759" y="284" width="22" height="20" fill="none" stroke="#cfcfcf" stroke-width="1.5" stroke-dasharray="2 2"/>
<circle cx="1771" cy="292" r="5" fill="none" stroke="#cfcfcf" stroke-width="1.5"/>
<rect x="1727.0" y="326.0" width="168.0" height="1.5" fill="#3e3e3e" />
<circle cx="1715" cy="522" r="1.6" fill="#cfcfcf"/>
<circle cx="1715" cy="528" r="1.6" fill="#cfcfcf"/>
<circle cx="1715" cy="534" r="1.6" fill="#cfcfcf"/>
<rect x="38" y="994" width="106" height="86" rx="5" fill="#c9c9c9"/>
<path d="M38,1014 L38,999 Q38,994 43,994 L139,994 Q144,994 144,999 L144,1014 Z" fill="#1c1c1c"/>
<text x="43.0" y="1009.0" font-family="Liberation Sans" font-size="16" font-weight="bold" font-style="normal" fill="#e0d21e" text-anchor="start" >Ch 1</text>
<text x="43.5" y="1031.3" font-family="Liberation Sans" font-size="16" font-weight="normal" font-style="normal" fill="#3a3a3a" text-anchor="start" letter-spacing="0.4" stroke="#3a3a3a" stroke-width="0.35">5 V/div</text>
<text x="43.5" y="1053.8" font-family="Liberation Sans" font-size="16" font-weight="normal" font-style="normal" fill="#3a3a3a" text-anchor="start" letter-spacing="0.4" stroke="#3a3a3a" stroke-width="0.35"></text>
<text x="43.5" y="1076.3" font-family="Liberation Sans" font-size="16" font-weight="normal" font-style="normal" fill="#3a3a3a" text-anchor="start" letter-spacing="0.4" stroke="#3a3a3a" stroke-width="0.35">250 MHz</text>
<rect x="150" y="994" width="106" height="86" rx="5" fill="#c9c9c9"/>
<path d="M150,1014 L150,999 Q150,994 155,994 L251,994 Q256,994 256,999 L256,1014 Z" fill="#1b3d44"/>
<text x="155.0" y="1009.0" font-family="Liberation Sans" font-size="16" font-weight="bold" font-style="normal" fill="#25b8c8" text-anchor="start" >Ch 2</text>
<text x="155.5" y="1031.3" font-family="Liberation Sans" font-size="16" font-weight="normal" font-style="normal" fill="#3a3a3a" text-anchor="start" letter-spacing="0.4" stroke="#3a3a3a" stroke-width="0.35">500 A/div</text>
<text x="155.5" y="1053.8" font-family="Liberation Sans" font-size="16" font-weight="normal" font-style="normal" fill="#3a3a3a" text-anchor="start" letter-spacing="0.4" stroke="#3a3a3a" stroke-width="0.35">1 MΩ</text>
<text x="155.5" y="1076.3" font-family="Liberation Sans" font-size="16" font-weight="normal" font-style="normal" fill="#3a3a3a" text-anchor="start" letter-spacing="0.4" stroke="#3a3a3a" stroke-width="0.35">350 MHz</text>
<rect x="262" y="994" width="106" height="86" rx="5" fill="#c9c9c9"/>
<path d="M262,1014 L262,999 Q262,994 267,994 L363,994 Q368,994 368,999 L368,1014 Z" fill="#8fcd2e"/>
<text x="267.0" y="1009.0" font-family="Liberation Sans" font-size="16" font-weight="bold" font-style="normal" fill="#1a1a1a" text-anchor="start" >Ch 4</text>
<text x="267.5" y="1031.3" font-family="Liberation Sans" font-size="16" font-weight="normal" font-style="normal" fill="#3a3a3a" text-anchor="start" letter-spacing="0.4" stroke="#3a3a3a" stroke-width="0.35">120 V/div</text>
<text x="267.5" y="1053.8" font-family="Liberation Sans" font-size="16" font-weight="normal" font-style="normal" fill="#3a3a3a" text-anchor="start" letter-spacing="0.4" stroke="#3a3a3a" stroke-width="0.35">1 MΩ</text>
<text x="267.5" y="1076.3" font-family="Liberation Sans" font-size="16" font-weight="normal" font-style="normal" fill="#3a3a3a" text-anchor="start" letter-spacing="0.4" stroke="#3a3a3a" stroke-width="0.35">350 MHz</text>
<path d="M46,1050 Q46,1040 53,1040 Q60,1040 60,1050" fill="none" stroke="#555" stroke-width="2"/>
<rect x="121" y="1067" width="8" height="5" fill="#555"/>
<rect x="374.0" y="1039.0" width="80.0" height="14.0" fill="#ffffff" />
<text x="414.0" y="1050.5" font-family="Liberation Serif" font-size="13" font-weight="bold" font-style="normal" fill="#222" text-anchor="middle" >0μs</text>
<rect x="791" y="989" width="46" height="89" rx="5" fill="url(#bg1)" stroke="#434343" stroke-width="1.5"/>
<rect x="795.0" y="996.0" width="38.0" height="3.0" fill="#d03c4a" />
<text x="814.0" y="1045.0" font-family="Liberation Sans" font-size="21" font-weight="normal" font-style="normal" fill="#e2e2e2" text-anchor="middle" >3</text>
<rect x="844" y="989" width="46" height="89" rx="5" fill="url(#bg1)" stroke="#434343" stroke-width="1.5"/>
<rect x="848.0" y="996.0" width="38.0" height="3.0" fill="#e0862a" />
<text x="867.0" y="1045.0" font-family="Liberation Sans" font-size="21" font-weight="normal" font-style="normal" fill="#e2e2e2" text-anchor="middle" >5</text>
<rect x="897" y="989" width="46" height="89" rx="5" fill="url(#bg1)" stroke="#434343" stroke-width="1.5"/>
<rect x="901.0" y="996.0" width="38.0" height="3.0" fill="#3a3ad0" />
<text x="920.0" y="1045.0" font-family="Liberation Sans" font-size="21" font-weight="normal" font-style="normal" fill="#e2e2e2" text-anchor="middle" >6</text>
<rect x="954.0" y="986.0" width="2.0" height="94.0" fill="#3c3c3c" />
<rect x="969" y="989" width="45" height="89" rx="5" fill="url(#bg1)" stroke="#434343" stroke-width="1.5"/>
<rect x="973.0" y="996.0" width="37.0" height="3.0" fill="#e0862a" />
<text x="991.5" y="1025.0" font-family="Liberation Sans" font-size="17" font-weight="normal" font-style="normal" fill="#e2e2e2" text-anchor="middle" >Add</text>
<text x="991.5" y="1044.0" font-family="Liberation Sans" font-size="17" font-weight="normal" font-style="normal" fill="#e2e2e2" text-anchor="middle" >New</text>
<text x="991.5" y="1063.0" font-family="Liberation Sans" font-size="17" font-weight="normal" font-style="normal" fill="#e2e2e2" text-anchor="middle" >Math</text>
<rect x="1022" y="989" width="45" height="89" rx="5" fill="url(#bg1)" stroke="#434343" stroke-width="1.5"/>
<rect x="1026.0" y="996.0" width="37.0" height="3.0" fill="#9a9a9a" />
<text x="1044.5" y="1025.0" font-family="Liberation Sans" font-size="17" font-weight="normal" font-style="normal" fill="#e2e2e2" text-anchor="middle" >Add</text>
<text x="1044.5" y="1044.0" font-family="Liberation Sans" font-size="17" font-weight="normal" font-style="normal" fill="#e2e2e2" text-anchor="middle" >New</text>
<text x="1044.5" y="1063.0" font-family="Liberation Sans" font-size="17" font-weight="normal" font-style="normal" fill="#e2e2e2" text-anchor="middle" >Ref</text>
<rect x="1074.5" y="989" width="45.5" height="89" rx="5" fill="url(#bg1)" stroke="#434343" stroke-width="1.5"/>
<rect x="1078.5" y="996.0" width="37.5" height="3.0" fill="#a050d0" />
<text x="1097.2" y="1025.0" font-family="Liberation Sans" font-size="17" font-weight="normal" font-style="normal" fill="#e2e2e2" text-anchor="middle" >Add</text>
<text x="1097.2" y="1044.0" font-family="Liberation Sans" font-size="17" font-weight="normal" font-style="normal" fill="#e2e2e2" text-anchor="middle" >New</text>
<text x="1097.2" y="1063.0" font-family="Liberation Sans" font-size="17" font-weight="normal" font-style="normal" fill="#e2e2e2" text-anchor="middle" >Bus</text>
<rect x="1133.0" y="986.0" width="2.0" height="94.0" fill="#3c3c3c" />
<rect x="1146.5" y="994.5" width="233.5" height="84.5" rx="5" fill="#c6c6c6"/>
<path d="M1146.5,1016 L1146.5,999.5 Q1146.5,994.5 1151.5,994.5 L1375,994.5 Q1380,994.5 1380,999.5 L1380,1016 Z" fill="#585858"/>
<text x="1152.5" y="1010.0" font-family="Liberation Sans" font-size="17" font-weight="bold" font-style="normal" fill="#e6e6e6" text-anchor="start" >Horizontal</text>
<text x="1152.5" y="1031.3" font-family="Liberation Sans" font-size="16" font-weight="normal" font-style="normal" fill="#333" text-anchor="start" stroke="#333" stroke-width="0.35">160 μs/div</text>
<text x="1276.5" y="1031.3" font-family="Liberation Sans" font-size="16" font-weight="normal" font-style="normal" fill="#333" text-anchor="start" stroke="#333" stroke-width="0.35">1.6 ms</text>
<text x="1152.5" y="1053.3" font-family="Liberation Sans" font-size="16" font-weight="normal" font-style="normal" fill="#333" text-anchor="start" stroke="#333" stroke-width="0.35">SR: 125 MS/s</text>
<text x="1276.5" y="1053.3" font-family="Liberation Sans" font-size="16" font-weight="normal" font-style="normal" fill="#333" text-anchor="start" stroke="#333" stroke-width="0.35">8 ns/pt</text>
<text x="1152.5" y="1075.3" font-family="Liberation Sans" font-size="16" font-weight="normal" font-style="normal" fill="#333" text-anchor="start" stroke="#333" stroke-width="0.35">RL: 200 kpts</text>
<text x="1292.0" y="1075.3" font-family="Liberation Sans" font-size="16" font-weight="normal" font-style="normal" fill="#333" text-anchor="start" stroke="#333" stroke-width="0.35">11%</text>
<rect x="1276" y="1061" width="9" height="11" fill="#222" stroke="#e08a28" stroke-width="1.5"/>
<rect x="1388.5" y="994.5" width="186.0" height="84.5" rx="5" fill="#c6c6c6"/>
<path d="M1388.5,1016 L1388.5,999.5 Q1388.5,994.5 1393.5,994.5 L1569.5,994.5 Q1574.5,994.5 1574.5,999.5 L1574.5,1016 Z" fill="#585858"/>
<text x="1394.5" y="1010.0" font-family="Liberation Sans" font-size="17" font-weight="bold" font-style="normal" fill="#e6e6e6" text-anchor="start" >Trigger</text>
<rect x="1394" y="1018" width="33" height="17" rx="4" fill="#f0e81a" stroke="#8a8a20" stroke-width="1"/>
<text x="1410.5" y="1031.0" font-family="Liberation Sans" font-size="13" font-weight="normal" font-style="normal" fill="#222" text-anchor="middle" >1</text>
<text x="1447.0" y="1033.0" font-family="Liberation Sans" font-size="20" font-weight="normal" font-style="normal" fill="#6a5acd" text-anchor="middle" >X</text>
<text x="1467.0" y="1031.3" font-family="Liberation Sans" font-size="16" font-weight="normal" font-style="normal" fill="#333" text-anchor="start" stroke="#333" stroke-width="0.35">1.2 V</text>
<rect x="1582.5" y="994.5" width="174.0" height="84.5" rx="5" fill="#c6c6c6"/>
<path d="M1582.5,1016 L1582.5,999.5 Q1582.5,994.5 1587.5,994.5 L1751.5,994.5 Q1756.5,994.5 1756.5,999.5 L1756.5,1016 Z" fill="#585858"/>
<text x="1588.5" y="1010.0" font-family="Liberation Sans" font-size="17" font-weight="bold" font-style="normal" fill="#e6e6e6" text-anchor="start" >Acquisition</text>
<text x="1587.0" y="1031.3" font-family="Liberation Sans" font-size="16" font-weight="normal" font-style="normal" fill="#333" text-anchor="start" stroke="#333" stroke-width="0.35">Auto,</text>
<text x="1679.0" y="1031.3" font-family="Liberation Sans" font-size="16" font-weight="normal" font-style="normal" fill="#333" text-anchor="start" stroke="#333" stroke-width="0.35">Analyze</text>
<text x="1587.0" y="1053.5" font-family="Liberation Sans" font-size="16" font-weight="normal" font-style="normal" fill="#333" text-anchor="start" stroke="#333" stroke-width="0.35">Sample: 12 bits</text>
<text x="1587.0" y="1075.5" font-family="Liberation Sans" font-size="16" font-weight="normal" font-style="normal" fill="#333" text-anchor="start" stroke="#333" stroke-width="0.35">Single: 1 /1</text>
<rect x="1769.0" y="986.0" width="2.0" height="94.0" fill="#3c3c3c" />
<rect x="1784" y="992" width="105.5" height="41.5" rx="5" fill="#ee1c25"/>
<text x="1836.7" y="1018.0" font-family="Liberation Sans" font-size="16" font-weight="bold" font-style="normal" fill="#ffffff" text-anchor="middle" >Stopped</text>
<rect x="1784" y="1041" width="105.5" height="35" rx="4" fill="#c6c6c6" stroke="#8a8a8a" stroke-width="1.5"/>
<text x="1836.7" y="1057.0" font-family="Liberation Sans" font-size="16" font-weight="normal" font-style="normal" fill="#333" text-anchor="middle" >15 Nov 2022</text>
<text x="1836.7" y="1076.0" font-family="Liberation Sans" font-size="16" font-weight="normal" font-style="normal" fill="#333" text-anchor="middle" >10:51:41 PM</text>
<line x1="514.0" y1="707.0" x2="1964.0" y2="551.5" stroke="#ff0000" stroke-width="4" />
<line x1="1963.5" y1="292.8" x2="2780.0" y2="292.8" stroke="#ff0000" stroke-width="3.8" stroke-dasharray="34.5 12.5" stroke-dashoffset="27"/>
<line x1="2780.0" y1="292.8" x2="2780.0" y2="974.5" stroke="#ff0000" stroke-width="3.8" stroke-dasharray="34.5 12.5" stroke-dashoffset="42.6"/>
<line x1="1963.5" y1="292.8" x2="1963.5" y2="974.5" stroke="#ff0000" stroke-width="3.8" stroke-dasharray="34.5 12.5" stroke-dashoffset="7.3"/>
<line x1="1963.5" y1="974.5" x2="2780.0" y2="974.5" stroke="#ff0000" stroke-width="3.8" stroke-dasharray="34.5 12.5" stroke-dashoffset="0.8"/>
<path d="M1966,954.4 L2272.5,954.4 L2275.5,500 L2276.5,420 L2279,360 L2283,318.5  C2285.1,320.7 2291.9,326.9 2295.8,331.9 C2299.7,336.9 2303.4,340.5 2306.5,348.7 C2309.6,356.9 2311.3,366.8 2314.1,380.8 C2316.9,394.8 2319.7,416.9 2323.3,432.7 C2326.9,448.5 2330.9,463.8 2335.5,475.5 C2340.1,487.2 2344.7,495.4 2350.8,503.0 C2356.9,510.6 2363.5,515.7 2372.2,521.3 C2380.8,526.9 2392.5,532.5 2402.7,536.6 C2412.9,540.7 2418.0,542.7 2433.3,545.7 C2448.6,548.8 2474.0,552.8 2494.3,554.9 C2514.7,557.0 2530.0,557.7 2555.4,558.6 C2580.8,559.5 2609.8,560.0 2647.0,560.4 C2684.2,560.8 2756.5,560.9 2778.4,561.0" fill="none" stroke="#8ccf5c" stroke-width="3" stroke-linejoin="round"/>
<line x1="2308.0" y1="342.6" x2="2340.0" y2="383.0" stroke="#ff0000" stroke-width="2.5" />
<polygon points="2348.0,393.0 2334.6,385.7 2344.1,378.3" fill="#ff0000"/>
<text x="2345.3" y="445.0" font-family="Liberation Serif" font-size="65" font-weight="normal" font-style="italic" fill="#ff0000" text-anchor="start" >V</text>
<text x="2381.0" y="454.0" font-family="Liberation Serif" font-size="41" font-weight="normal" font-style="italic" fill="#ff0000" text-anchor="start" >DS_PEAK</text>
<text x="2561.6" y="445.0" font-family="Liberation Serif" font-size="65" font-weight="normal" font-style="normal" fill="#ff0000" text-anchor="start" >=</text>
<text x="2614.0" y="445.0" font-family="Liberation Serif" font-size="63.5" font-weight="normal" font-style="normal" fill="#ff0000" text-anchor="start" >475 V</text>
</svg>
</body></html>
